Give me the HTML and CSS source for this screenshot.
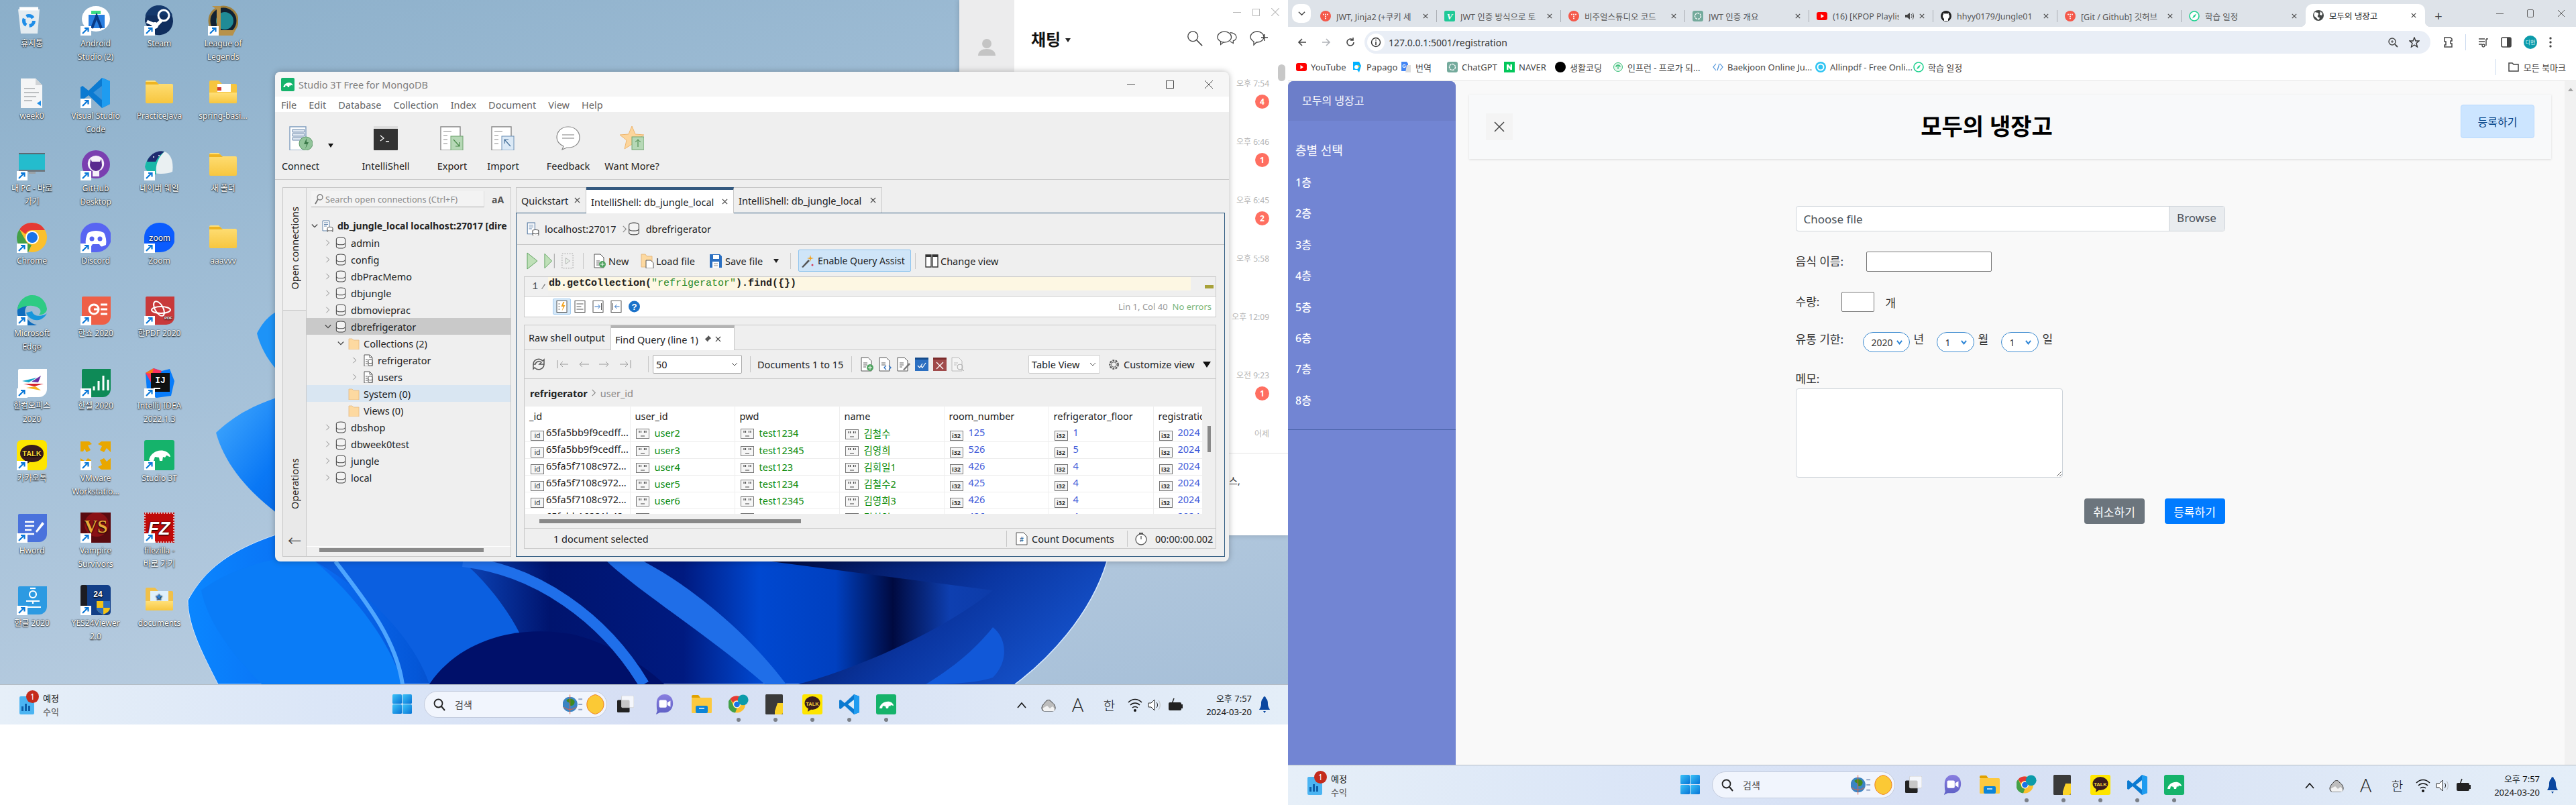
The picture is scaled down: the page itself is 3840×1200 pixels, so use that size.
FILE: index.html
```html
<!DOCTYPE html>
<html lang="ko">
<head>
	<meta charset="UTF-8">
	<title>모두의 냉장고</title>
	<link rel="stylesheet" href="styles.css">
</head>
<body>
<svg class="defs" xmlns="http://www.w3.org/2000/svg">
	<defs>
		<linearGradient id="wp-a" x1="0" y1="0" x2="1" y2="1"><stop offset="0" stop-color="#4db2ff"/><stop offset=".45" stop-color="#0a78f5"/><stop offset="1" stop-color="#0450d2"/></linearGradient>
		<linearGradient id="wp-b" x1="0" y1="0" x2="1" y2="0"><stop offset="0" stop-color="#0a86ff"/><stop offset=".14" stop-color="#0a6cf2"/><stop offset=".24" stop-color="#0457d8"/><stop offset=".3" stop-color="#0a3fb0"/><stop offset=".38" stop-color="#00146e"/><stop offset=".52" stop-color="#001a80"/><stop offset=".6" stop-color="#0048d0"/><stop offset=".68" stop-color="#0040c0"/><stop offset=".74" stop-color="#000a40"/><stop offset=".8" stop-color="#0e3fb0"/><stop offset="1" stop-color="#0a2f90"/></linearGradient>
		<linearGradient id="wp-c" x1="0" y1="0" x2="1" y2=".4"><stop offset="0" stop-color="#000a40"/><stop offset=".6" stop-color="#0a35a0"/><stop offset="1" stop-color="#1450c8"/></linearGradient>
		<linearGradient id="fold" x1="0" y1="0" x2="0" y2="1"><stop offset="0" stop-color="#ffe07a"/><stop offset="1" stop-color="#f7c63f"/></linearGradient>
		<linearGradient id="win" x1="0" y1="0" x2="1" y2="1"><stop offset="0" stop-color="#3cc4f8"/><stop offset="1" stop-color="#0773d6"/></linearGradient>
		<linearGradient id="tball" x1="0" y1="0" x2="0" y2="1"><stop offset="0" stop-color="#8a7fe0"/><stop offset="1" stop-color="#5d5fc4"/></linearGradient>

		<g id="sc"><rect x="0" y="31" width="16" height="14" fill="#fff"/><path d="M3 42l8-8M6 34h5.5v5.5" fill="none" stroke="#0a78d8" stroke-width="2.2"/></g>
		<g id="d-bin"><path d="M2 6h32l-3 36H6z" fill="#e4ecf1"/><path d="M4 5h28" stroke="#fff" stroke-width="5"/><circle cx="18" cy="23" r="7.5" fill="none" stroke="#1f8ee8" stroke-width="5" stroke-dasharray="11 4.7"/></g>
		<g id="d-android"><ellipse cx="23" cy="20" rx="21" ry="19" fill="#fff"/><path d="M16 8h14v5H16z" fill="#3ddc84"/><path d="M12 14h24v20H12z" fill="#2a7fe0"/><path d="M17 34l7-18 7 18" fill="none" stroke="#083a86" stroke-width="4"/></g>
		<g id="d-steam"><path d="M1 24a21 21 0 1 1 6 14z" fill="#102e5e"/><path d="M1 18a21 21 0 0 1 41-3H1z" fill="#14386c"/><circle cx="29" cy="15" r="8" fill="none" stroke="#fff" stroke-width="3"/><path d="M4 24l14 6 8-8" fill="none" stroke="#fff" stroke-width="5"/><circle cx="16" cy="30" r="5" fill="#fff"/></g>
		<g id="d-lol"><circle cx="23" cy="23" r="21" fill="#123" stroke="#a0803c" stroke-width="3"/><circle cx="25" cy="23" r="13" fill="#1f8b96"/><path d="M6 1h13v36h22l-4 8H10l3-4V6z" fill="#b7924b"/></g>
		<g id="d-doc"><path d="M6 1h22l10 10v34H6z" fill="#f4f5f6"/><path d="M28 1v10h10" fill="#d0d3d6"/><path d="M11 16h16M11 22h22M11 28h18M11 34h12" stroke="#a9adb0" stroke-width="1.6"/><path d="M30 38l6-4v8z" fill="#1f8ee8"/></g>
		<g id="d-vscode"><path d="M32 0l12 5v34l-12 6L12 26 3 33l-3-2v-17l3-2 9 7z" fill="#0b7ad1"/><path d="M32 0l12 5v34l-12 6z" fill="#1f9cf0"/><path d="M32 12L19 22l13 11z" fill="#fff" fill-opacity=".2"/></g>
		<g id="d-folder"><path d="M2 6a2 2 0 0 1 2-2h12l5 5h20a2 2 0 0 1 2 2v25a2 2 0 0 1-2 2H4a2 2 0 0 1-2-2z" fill="url(#fold)"/><path d="M2 6h16l4 4H2z" fill="#eeb421"/></g>
		<g id="d-folder2"><path d="M2 6a2 2 0 0 1 2-2h12l5 5h20a2 2 0 0 1 2 2v25a2 2 0 0 1-2 2H4a2 2 0 0 1-2-2z" fill="#f6c53e"/><path d="M14 9h20v12H14z" fill="#fff"/><path d="M14 14h6v5h-6z" fill="#d23b30"/><path d="M2 22h41v14a2 2 0 0 1-2 2H4a2 2 0 0 1-2-2z" fill="url(#fold)"/></g>
		<g id="d-pc"><rect x="3" y="4" width="39" height="27" fill="#24bccd"/><rect x="3" y="4" width="39" height="2" fill="#5d6a74"/><rect x="3" y="29" width="39" height="3" fill="#6e7880"/><path d="M18 32h10v3H18z" fill="#9aa2a8"/></g>
		<g id="d-github"><circle cx="23" cy="21" r="21" fill="#7a3fb0"/><path d="M23 8a12 12 0 0 0-5 23v8h10v-8a12 12 0 0 0-5-23z" fill="#fff" fill-opacity=".92"/><path d="M15 13l2 4h12l2-4 1 9a9 9 0 0 1-18 0z" fill="#5a2a90"/></g>
		<g id="d-whale"><path d="M1 25C3 8 20 0 30 2c10 3 14 16 12 30-8 4-32 6-41-7z" fill="#eaf0f2"/><path d="M1 25C3 8 20 0 30 2 22 10 16 20 18 36 10 36 3 32 1 25z" fill="#19b7a8"/><path d="M4 17C8 6 20-1 30 2c-6 4-10 9-13 15z" fill="#1f2b70"/><circle cx="14" cy="10" r="1" fill="#fff"/><circle cx="22" cy="8" r="1" fill="#fff"/></g>
		<g id="d-chrome"><circle cx="23" cy="22" r="22" fill="#fbc02d"/><path d="M23 0a22 22 0 0 1 19 11H23a11 11 0 0 0-10 6L4 10A22 22 0 0 1 23 0z" fill="#e53935"/><path d="M4 10l9 16a11 11 0 0 0 9 7l-5 11A22 22 0 0 1 4 10z" fill="#43a047"/><circle cx="23" cy="22" r="10" fill="#fff"/><circle cx="23" cy="22" r="8" fill="#1a73e8"/></g>
		<g id="d-discord"><path d="M0 22a22 22 0 0 1 22-22h2a22 22 0 0 1 22 22 22 22 0 0 1-22 22H0z" fill="#5865f2"/><path d="M11 15c8-4 16-4 24 0 3 6 4 12 3 18-4 2-6 3-8 2l-2-3H18l-2 3c-2 1-4 0-8-2-1-6 0-12 3-18z" fill="#fff"/><circle cx="17" cy="24" r="3.5" fill="#5865f2"/><circle cx="29" cy="24" r="3.5" fill="#5865f2"/></g>
		<g id="d-zoom"><path d="M0 22a22 22 0 0 1 22-22h2a22 22 0 0 1 22 22 22 22 0 0 1-22 22H0z" fill="#0b5cff"/><text x="23" y="27" text-anchor="middle" class="svgt z">zoom</text></g>
		<g id="d-edge"><path d="M1 22A22 22 0 0 1 44 17C40 8 20 8 14 18 8 28 18 43 30 44 14 50-1 38 1 22z" fill="#0f6cbd"/><path d="M1 22C2 8 13 0 23 0c12 0 20 8 22 20 0 6-6 10-12 9 5-4 3-12-10-13C12 15 3 20 1 22z" fill="#2ecb84"/><path d="M14 26c2 8 13 14 22 10 4-2 7-5 9-9-4 4-20 7-22-3z" fill="#1896dc"/></g>
		<g id="d-show"><path d="M2 4a2 2 0 0 1 2-2h41v30a12 12 0 0 1-12 12H2z" fill="#ee5f47"/><circle cx="20" cy="21" r="7" fill="none" stroke="#fff" stroke-width="3"/><path d="M20 21h8M30 14h10M30 21h10M30 28h10" stroke="#fff" stroke-width="3"/></g>
		<g id="d-pdf"><path d="M2 4a2 2 0 0 1 2-2h41v30a12 12 0 0 1-12 12H2z" fill="#c8393a"/><g fill="none" stroke="#fff" stroke-width="2"><ellipse cx="22" cy="20" rx="6" ry="12" transform="rotate(-30 22 20)"/><ellipse cx="25" cy="22" rx="14" ry="5"/></g><text x="36" y="36" text-anchor="middle" class="svgt p">PDF</text></g>
		<g id="d-office"><path d="M2 4a2 2 0 0 1 2-2h41v30a12 12 0 0 1-12 12H2z" fill="#fff"/><path d="M8 20l22-5-12 7z" fill="#16a5c8"/><path d="M10 24h30l-14 4z" fill="#d5232c"/><path d="M14 30l14-2 8 6z" fill="#f4b01c"/><path d="M22 21l14-9-4 10z" fill="#6a2fa0"/></g>
		<g id="d-cell"><path d="M2 4a2 2 0 0 1 2-2h41v30a12 12 0 0 1-12 12H2z" fill="#0e8a57"/><path d="M20 34v-6M27 34V20M34 34V12M41 34V18" stroke="#fff" stroke-width="3"/></g>
		<g id="d-idea"><path d="M2 8L14 1l12 4 12-3 7 18-5 22-22 3-14-10z" fill="#087cfa"/><path d="M2 8L14 1l12 4-12 24z" fill="#fe315d"/><path d="M2 8l12-7-2 8z" fill="#f97a12"/><rect x="10" y="8" width="28" height="28" fill="#111"/><text x="24" y="23" text-anchor="middle" class="svgt ij">IJ</text><path d="M14 31h10" stroke="#fff" stroke-width="2"/></g>
		<g id="d-talk"><rect x="0" y="0" width="45" height="45" rx="7" fill="#fee500"/><ellipse cx="22.5" cy="20" rx="17.5" ry="13" fill="#3a1d1d"/><path d="M12 30l-1 8 8-5z" fill="#3a1d1d"/><text x="22.5" y="24" text-anchor="middle" class="svgt t">TALK</text></g>
		<g id="d-vm" fill="#e9a700"><path d="M0 2h13l4 4-6 2 4 7-6 3-3-5-2 4H0z"/><path d="M45 2H31l-5 4 6 3-3 6 6 3 4-6 6 6z"/><path d="M0 44h13l4-4-5-3 4-7-5-3-4 5-7-5z"/><path d="M45 44H31l-5-4 6-3-3-7 6-3 4 5 6-5z"/></g>
		<g id="d-3t"><rect width="45" height="45" rx="3" fill="#15b36b"/><path d="M7 30c2-10 12-16 22-14 6 1 10 6 10 9-3 0-4-2-6-2l-2 3-3-1-1 6h-4l-1-5-6-1-2 6H9z" fill="#fff"/></g>
		<g id="d-hword"><path d="M2 4a2 2 0 0 1 2-2h41v30a12 12 0 0 1-12 12H2z" fill="#4a72dc"/><path d="M12 14h14M12 20h14M12 26h10M12 32h14" stroke="#fff" stroke-width="2.6"/><path d="M28 28l10-14 3 3-11 13z" fill="#fff"/></g>
		<g id="d-vs"><rect width="45" height="45" fill="#5a0a10"/><circle cx="24" cy="18" r="18" fill="#8a1015"/><text x="23" y="30" text-anchor="middle" class="svgt vs">VS</text></g>
		<g id="d-fz"><rect width="45" height="45" fill="#bf0a0a"/><path d="M1 1h43v43H1z" fill="none" stroke="#e9e2e2" stroke-width="1.6" stroke-dasharray="2 2"/><text x="22" y="33" text-anchor="middle" class="svgt fz">FZ</text></g>
		<g id="d-hangul"><path d="M2 4a2 2 0 0 1 2-2h41v30a12 12 0 0 1-12 12H2z" fill="#2c9ae2"/><circle cx="24" cy="14" r="5" fill="none" stroke="#fff" stroke-width="2.2"/><path d="M14 24h20M24 24v4M12 33h24" stroke="#fff" stroke-width="2.2"/><path d="M20 5h8" stroke="#fff" stroke-width="2.2"/></g>
		<g id="d-yes"><rect width="45" height="45" rx="5" fill="#123f88"/><rect width="10" height="45" rx="3" fill="#1c1c22"/><text x="26" y="18" text-anchor="middle" class="svgt y">24</text><path d="M24 24h20v10c0 5-5 8-10 10-5-2-10-5-10-10z" fill="#f3c316"/><path d="M34 24h10v10H34zM24 34h10v10c-5-2-10-5-10-10z" fill="#2f6fbc"/></g>
		<g id="d-docs"><path d="M2 6a2 2 0 0 1 2-2h12l5 5h20a2 2 0 0 1 2 2v25a2 2 0 0 1-2 2H4a2 2 0 0 1-2-2z" fill="#f0c04a"/><path d="M9 9h27v18H9z" fill="#dff0fb"/><text x="22" y="21" text-anchor="middle" class="svgt s">★</text><path d="M2 24h41v12a2 2 0 0 1-2 2H4a2 2 0 0 1-2-2z" fill="url(#fold)"/></g>

		<g id="t-db"><ellipse cx="9" cy="4" rx="7" ry="3" /><path d="M2 4v11c0 4 14 4 14 0V4M2 9.5c0 4 14 4 14 0"/></g>
		<g id="t-conn"><path d="M2 1h10v15H2z" fill="#fff" stroke="#5b7ea6"/><path d="M4 4h6M4 6.5h6M4 9h4" stroke="#5b7ea6"/><ellipse cx="13" cy="12" rx="4" ry="1.6" fill="#fff" stroke="#555"/><path d="M9 12v5c0 2 8 2 8 0v-5M9 14.5c0 2 8 2 8 0" fill="#fff" stroke="#555"/></g>
		<g id="t-fold"><path d="M2 2h5l2 2h8v14H2z" fill="#fdd9a0" stroke="#e5b980" stroke-width=".8"/></g>
		<g id="t-coll"><path d="M4 1h8l4 4v13H4z" fill="#fff" stroke="#555"/><path d="M12 1v4h4" fill="none" stroke="#555"/><path d="M6 8h3M6 11h3M6 14h3" stroke="#555"/><ellipse cx="13" cy="9" rx="3" ry="1.2" fill="#fff" stroke="#555"/><path d="M10 9v7c0 1.6 6 1.6 6 0V9M10 12.5c0 1.6 6 1.6 6 0" fill="#fff" stroke="#555"/></g>
		<g id="t-str"><rect x=".5" y=".5" width="19" height="14" fill="#f6f6f6" stroke="#777"/><path d="M5 3v3M7.500 3v3M12.500 3v3M15 3v3M7 11h6" stroke="#444" stroke-width="1.200"/></g>
		<g id="i-chev"><path d="M3 1l5 5-5 5" fill="none" stroke="#888" stroke-width="1.200"/></g>
		<g id="i-chevd"><path d="M1 3l5 5 5-5" fill="none" stroke="#444" stroke-width="1.500"/></g>

		<g id="f-tis"><circle cx="8" cy="8" r="8" fill="#f4594b"/><g fill="#fff"><circle cx="5" cy="5.500" r="1"/><circle cx="8" cy="5.500" r="1"/><circle cx="11" cy="5.500" r="1"/><circle cx="8" cy="8.500" r="1"/><circle cx="8" cy="11.500" r="1"/></g></g>
		<g id="f-yt"><rect y="2" width="16" height="12" rx="3" fill="#f00"/><path d="M6.500 5l4.500 3-4.500 3z" fill="#fff"/></g>
		<g id="f-gpt"><rect width="16" height="16" rx="3" fill="#74aa9c"/><circle cx="8" cy="8" r="4.500" fill="none" stroke="#fff" stroke-width="1.400" stroke-dasharray="3 1"/></g>
		<g id="f-git"><circle cx="8" cy="8" r="8" fill="#222"/><path d="M5 15v-3c-1-1-2-2-2-4 0-1 .4-2 1-2.500L4 3.500l2 1c1.300-.4 2.700-.4 4 0l2-1-.1 2c.6.5 1.100 1.500 1.100 2.500 0 2-1 3-2 4v3z" fill="#fff"/></g>
		<g id="f-compass"><circle cx="8" cy="8" r="7" fill="#fff" stroke="#1fd18f" stroke-width="1.600"/><path d="M11 4.500L9 9 5 11.500 7 7z" fill="#1fd18f"/></g>
		<g id="f-globe"><circle cx="8" cy="8" r="8" fill="#444746"/><path d="M3 3c2 1 4 0 5 2s-2 3-1 5 2 0 3 2l-2 3c-2-2-3-4-5-5S1 5 3 3zM11 2l3 3-1 3-3-1z" fill="#fff"/></g>

		<g id="x-ic"><path d="M1 1l8 8M9 1l-8 8" stroke="#444" stroke-width="1.400"/></g>

		<g id="tb-win"><rect width="14" height="14" rx="1.500" fill="url(#win)"/><rect x="15" width="14" height="14" rx="1.500" fill="url(#win)"/><rect y="15" width="14" height="14" rx="1.500" fill="url(#win)"/><rect x="15" y="15" width="14" height="14" rx="1.500" fill="url(#win)"/></g>
		<g id="tb-mag"><circle cx="7.500" cy="7.500" r="6" fill="none" stroke="#222" stroke-width="1.800"/><path d="M12 12l5 6" stroke="#222" stroke-width="2"/></g>
		<g id="tb-art"><circle cx="11" cy="15" r="11.500" fill="#3b84c4"/><path d="M6 8c4-3 10-2 12 2 1 4-3 8-6 7-2-1-1-4-3-5S5 10 6 8z" fill="#3f8a1f"/><path d="M11 0v30M1 19c6 5 14 5 20 0" stroke="#e9603c" fill="none"/><path d="M30 7h-6M30 15h-6M30 23h-6" stroke="#94a6c8" stroke-width="2"/><path d="M50 0c-9 2-13 8-13 15s4 13 13 15c8-2 13-8 13-15S58 2 50 0z" fill="#fbc935" stroke="#ed7d1c" stroke-width="1"/></g>
		<g id="tb-view"><rect x="0" y="8" width="23" height="23" rx="2" fill="#222"/><rect x="8" y="0" width="23" height="22" rx="2" fill="#fff" fill-opacity=".75" stroke="#ccc"/></g>
		<g id="tb-meet"><path d="M2 14C2 5 8 0 15 0s13 5 13 14-6 15-13 15H7l-6 3 2-6c-1-3-1-8-1-12z" fill="url(#tball)"/><rect x="6" y="9" width="12" height="12" rx="2" fill="#fff"/><path d="M19 13l5-3v10l-5-3z" fill="#fff"/></g>
		<g id="tb-exp"><path d="M0 3a2 2 0 0 1 2-2h8l3 4H0z" fill="#e0a100"/><rect y="5" width="30" height="23" rx="1.500" fill="#fcc93f"/><rect x="6" y="17" width="18" height="11" rx="2" fill="#0b84d8"/><path d="M11 21h8" stroke="#fff" stroke-width="1.400"/></g>
		<g id="tb-chrome"><circle cx="15" cy="16" r="15" fill="#fbc02d"/><path d="M15 1a15 15 0 0 1 13 8H15a7.500 7.500 0 0 0-7 4L3 6A15 15 0 0 1 15 1z" fill="#e53935"/><path d="M3 6l5 11a7.500 7.500 0 0 0 7 6l-3 8A15 15 0 0 1 3 6z" fill="#43a047"/><circle cx="15" cy="16" r="6.500" fill="#fff"/><circle cx="15" cy="16" r="5.200" fill="#1a73e8"/><circle cx="26" cy="8" r="9.500" fill="#0c9baa"/></g>
		<g id="tb-note"><rect width="26" height="30" rx="1.500" fill="#3a3a3a"/><path d="M14 25l4-12h8v14a3 3 0 0 1-3 3h-9z" fill="#fbd327"/></g>
		<g id="tb-talk"><rect width="30" height="30" rx="3" fill="#fee500"/><ellipse cx="15" cy="13" rx="11.500" ry="10" fill="#3a1d1d"/><path d="M9 20l-1 6 6-4z" fill="#3a1d1d"/><text x="15" y="16.500" text-anchor="middle" class="svgt tt">TALK</text></g>
		<g id="tb-code"><path d="M22 0l8 3v24l-8 3L8 17l-6 5-2-1V9l2-1 6 5z" fill="#0b7ad1"/><path d="M22 0l8 3v24l-8 3z" fill="#1f9cf0"/><path d="M22 8l-9 7 9 7z" fill="#fff" fill-opacity=".85"/></g>
		<g id="tb-3t"><rect width="30" height="30" rx="3" fill="#15b36b"/><path d="M5 21c1-7 8-11 15-10 4 1 6 4 6 6-2 0-3-1-4-1l-1 2-2-1-1 4h-3l-1-3-4-1-1 4H6z" fill="#fff"/></g>
		<g id="tr-cloud"><path d="M4 20c-3 0-4-2-4-5s3-6 5-8c2-4 7-5 9-1 3 2 6 5 6 9s-2 5-5 5z" fill="#bdbdbd" stroke="#333" stroke-width="1"/><path d="M1 16l7-4 4 4 4-3 3 3v3a2 2 0 0 1-2 1H3z" fill="#f3f3f3"/></g>
		<g id="tr-wifi"><path d="M1 7c6-6 14-6 20 0M4 11c4-4 10-4 14 0M7 15c2-2 6-2 8 0" fill="none" stroke="#111" stroke-width="1.500"/><circle cx="11" cy="19" r="2" fill="#111"/></g>
		<g id="tr-vol"><path d="M1 8h4l5-5v16l-5-5H1z" fill="#fff" stroke="#222"/><path d="M13 7c2 2 2 6 0 8" fill="none" stroke="#222"/><path d="M16 4c3 4 3 10 0 14" fill="none" stroke="#bbb"/></g>
		<g id="tr-bat"><rect x="1" y="6" width="19" height="12" rx="2" fill="#222"/><rect x="20" y="9" width="2" height="6" fill="#222"/><path d="M9 0l-3 8h4l-2 7" fill="none" stroke="#222" stroke-width="1.500"/></g>
		<g id="tr-bell"><path d="M9 0a3 3 0 0 1 2 3c3 2 3 6 3 9 0 3 2 6 3 8H1c1-2 3-5 3-8 0-3 0-7 3-9a3 3 0 0 1 2-3z" fill="#0a47a0"/><path d="M7 22h4l-2 3z" fill="#0a47a0"/></g>

		<g id="tool-connect"><path d="M2 1h24v35H2z" fill="#fff" stroke="#7f9dbf" stroke-width="1.400"/><path d="M6 5h18v4H6zM6 11h18v4H6zM6 17h18v4H6z" fill="#dde6f0" stroke="#6a88ab"/><circle cx="26" cy="26" r="10" fill="#92c49a" stroke="#5e9a6a"/><path d="M27 18l-4 9h4l-2 7 5-10h-3z" fill="#3c7a4a"/></g>
		<g id="tool-shell"><rect width="36" height="36" rx="1" fill="#333"/><rect width="36" height="4" fill="#ddd"/><path d="M10 14l5 4-5 4" fill="none" stroke="#fff" stroke-width="1.300"/><path d="M18 23h5" stroke="#fff" stroke-width="1.300"/></g>
		<g id="tool-exp"><path d="M1 1h29v35H1z" fill="#fff" stroke="#888" stroke-width="1.400"/><path d="M5 8h12M5 14h6M5 20h6M5 26h6" stroke="#888"/><rect x="16" y="15" width="18" height="21" fill="#b6d8b6" stroke="#6ea36e"/><path d="M20 20l9 10m0-6v6h-6" fill="none" stroke="#4a8a4a" stroke-width="1.200"/></g>
		<g id="tool-imp"><path d="M1 1h29v35H1z" fill="#fff" stroke="#888" stroke-width="1.400"/><path d="M5 8h12M5 14h6M5 20h6M5 26h6" stroke="#888"/><rect x="16" y="15" width="18" height="21" fill="#dbe9f6" stroke="#6a8eb3"/><path d="M29 30l-9-10m0 6v-6h6" fill="none" stroke="#456f99" stroke-width="1.200"/></g>
		<g id="tool-fb"><path d="M18 1c10 0 17 7 17 16s-7 15-17 15h-2l-7 3 2-5C5 27 1 23 1 17 1 8 8 1 18 1z" fill="#fff" stroke="#888" stroke-width="1.200"/><path d="M9 13h18M9 18h18" stroke="#aaa" stroke-width="1.400"/></g>
		<g id="tool-more"><path d="M18 0l5 12 13 1-10 8 3 13-11-7-11 7 3-13L0 13l13-1z" fill="#fcd59c" stroke="#eeb66f"/><rect x="18" y="16" width="18" height="19" fill="#b6d8b6" stroke="#6ea36e"/><path d="M27 31v-11m-4 4l4-4 4 4" fill="none" stroke="#3e7f3e"/></g>
	</defs>
</svg>

<div class="screens">
	<section class="monitor monitor-left">
		<div class="desktop">
			<svg class="wallpaper" viewBox="0 0 1920 1020" preserveAspectRatio="none">
				<path d="M383 497C400 465 420 450 520 440V620C440 590 395 545 383 497Z" fill="#1d93f7"/>
				<path d="M322 645C360 610 400 590 520 565V830C400 770 340 710 322 645Z" fill="url(#wp-a)"/>
				<path d="M280 895C310 840 360 800 520 770L1700 680 1650 837C1625 920 1560 985 1513 1020H325C305 980 280 935 280 895Z" fill="url(#wp-b)" stroke="#d3e6fb" stroke-width="1"/>
				<path d="M300 880C340 850 420 820 470 837 520 880 580 950 600 1020H390C350 980 310 930 300 880Z" fill="#0a7cf7"/>
				<path d="M470 837C560 890 620 960 640 1020H800C790 950 740 880 690 837Z" fill="#0b5fe0"/>
				<path d="M600 1020C590 950 540 890 500 837" fill="none" stroke="#4ea6ff" stroke-width="6"/>
				<path d="M640 1020C680 960 760 930 850 945 900 955 960 990 990 1020Z" fill="#00106a"/>
				<path d="M690 837C800 850 900 920 960 1020" fill="none" stroke="#1f6fea" stroke-width="16"/>
				<path d="M905 837C950 880 1060 950 1140 1020H1172C1120 950 1040 880 960 837Z" fill="#1f6ee8"/>
				<path d="M1150 837H1650C1625 920 1560 985 1513 1020H1190C1300 990 1420 930 1480 880Z" fill="url(#wp-c)"/>
				<path d="M1480 935C1500 950 1505 985 1480 1010 1450 1020 1400 1020 1380 1020 1430 990 1460 960 1480 935Z" fill="#1158d8"/>
				<path d="M1650 837C1625 920 1560 985 1513 1020" fill="none" stroke="#d3e6fb" stroke-width="1.500"/>
			</svg>

			<div class="icons">
				<div class="d-item"><svg viewBox="0 0 45 45"><use href="#d-bin"/></svg><span>휴지통</span></div>
				<div class="d-item"><svg viewBox="0 0 45 45"><use href="#d-android"/><use href="#sc"/></svg><span>Android<br>Studio (2)</span></div>
				<div class="d-item"><svg viewBox="0 0 45 45"><use href="#d-steam"/><use href="#sc"/></svg><span>Steam</span></div>
				<div class="d-item"><svg viewBox="0 0 45 45"><use href="#d-lol"/><use href="#sc"/></svg><span>League of<br>Legends</span></div>

				<div class="d-item"><svg viewBox="0 0 45 45"><use href="#d-doc"/></svg><span>week0</span></div>
				<div class="d-item"><svg viewBox="0 0 45 45"><use href="#d-vscode"/><use href="#sc"/></svg><span>Visual Studio<br>Code</span></div>
				<div class="d-item"><svg viewBox="0 0 45 45"><use href="#d-folder"/></svg><span>PracticeJava</span></div>
				<div class="d-item"><svg viewBox="0 0 45 45"><use href="#d-folder2"/></svg><span>spring-basi...</span></div>

				<div class="d-item"><svg viewBox="0 0 45 45"><use href="#d-pc"/><use href="#sc"/></svg><span>내 PC - 바로<br>가기</span></div>
				<div class="d-item"><svg viewBox="0 0 45 45"><use href="#d-github"/><use href="#sc"/></svg><span>GitHub<br>Desktop</span></div>
				<div class="d-item"><svg viewBox="0 0 45 45"><use href="#d-whale"/><use href="#sc"/></svg><span>네이버 웨일</span></div>
				<div class="d-item"><svg viewBox="0 0 45 45"><use href="#d-folder"/></svg><span>새 폴더</span></div>

				<div class="d-item"><svg viewBox="0 0 45 45"><use href="#d-chrome"/><use href="#sc"/></svg><span>Chrome</span></div>
				<div class="d-item"><svg viewBox="0 0 45 45"><use href="#d-discord"/><use href="#sc"/></svg><span>Discord</span></div>
				<div class="d-item"><svg viewBox="0 0 45 45"><use href="#d-zoom"/><use href="#sc"/></svg><span>Zoom</span></div>
				<div class="d-item"><svg viewBox="0 0 45 45"><use href="#d-folder"/></svg><span>aaavvv</span></div>

				<div class="d-item"><svg viewBox="0 0 45 45"><use href="#d-edge"/><use href="#sc"/></svg><span>Microsoft<br>Edge</span></div>
				<div class="d-item"><svg viewBox="0 0 45 45"><use href="#d-show"/><use href="#sc"/></svg><span>한쇼 2020</span></div>
				<div class="d-item"><svg viewBox="0 0 45 45"><use href="#d-pdf"/><use href="#sc"/></svg><span>한PDF 2020</span></div>
				<div></div>

				<div class="d-item"><svg viewBox="0 0 45 45"><use href="#d-office"/><use href="#sc"/></svg><span>한컴오피스<br>2020</span></div>
				<div class="d-item"><svg viewBox="0 0 45 45"><use href="#d-cell"/><use href="#sc"/></svg><span>한셀 2020</span></div>
				<div class="d-item"><svg viewBox="0 0 45 45"><use href="#d-idea"/><use href="#sc"/></svg><span>IntelliJ IDEA<br>2022.1.3</span></div>
				<div></div>

				<div class="d-item"><svg viewBox="0 0 45 45"><use href="#d-talk"/><use href="#sc"/></svg><span>카카오톡</span></div>
				<div class="d-item"><svg viewBox="0 0 45 45"><use href="#d-vm"/><use href="#sc"/></svg><span>VMware<br>Workstatio...</span></div>
				<div class="d-item"><svg viewBox="0 0 45 45"><use href="#d-3t"/><use href="#sc"/></svg><span>Studio 3T</span></div>
				<div></div>

				<div class="d-item"><svg viewBox="0 0 45 45"><use href="#d-hword"/><use href="#sc"/></svg><span>Hword</span></div>
				<div class="d-item"><svg viewBox="0 0 45 45"><use href="#d-vs"/><use href="#sc"/></svg><span>Vampire<br>Survivors</span></div>
				<div class="d-item"><svg viewBox="0 0 45 45"><use href="#d-fz"/><use href="#sc"/></svg><span>filezilla -<br>바로 가기</span></div>
				<div></div>

				<div class="d-item"><svg viewBox="0 0 45 45"><use href="#d-hangul"/><use href="#sc"/></svg><span>한글 2020</span></div>
				<div class="d-item"><svg viewBox="0 0 45 45"><use href="#d-yes"/><use href="#sc"/></svg><span>YES24Viewer<br>2.0</span></div>
				<div class="d-item"><svg viewBox="0 0 45 45"><use href="#d-docs"/></svg><span>documents</span></div>
			</div>

			<!-- kakaotalk, mostly behind studio 3t -->
			<div class="kakao">
				<div class="kk-nav">
					<svg class="kk-me" viewBox="0 0 28 28"><circle cx="14" cy="9" r="7" fill="#c4c4c4"/><path d="M1 27c0-7 6-10 13-10s13 3 13 10z" fill="#c4c4c4"/></svg>
				</div>
				<div class="kk-main">
					<div class="kk-win"><span class="kk-min"></span><span class="kk-max"></span><svg class="kk-x" viewBox="0 0 12 12"><path d="M0 0l12 12M12 0L0 12" stroke="#bbb" stroke-width="1.200"/></svg></div>
					<div class="kk-head">
						<span class="kk-title">채팅</span><span class="kk-caret"></span>
						<div class="kk-tools">
							<svg viewBox="0 0 26 26"><circle cx="10" cy="10" r="8" fill="none" stroke="#444" stroke-width="1.500"/><path d="M16 16l9 9" stroke="#444" stroke-width="1.800"/></svg>
							<svg viewBox="0 0 32 24"><ellipse cx="12" cy="10" rx="11" ry="8.500" fill="none" stroke="#444" stroke-width="1.300"/><path d="M21 3c5 0 10 3 10 7 0 3-2 5-5 6v4l-5-3M6 17v5l5-4" fill="none" stroke="#444" stroke-width="1.300"/></svg>
							<svg viewBox="0 0 28 24"><path d="M11 2c6 0 10 4 10 8s-4 8-10 8h-1l-4 4v-5C3 15 1 13 1 10c0-4 4-8 10-8z" fill="none" stroke="#444" stroke-width="1.300"/><path d="M22 6v10M17 11h10" stroke="#444" stroke-width="1.400"/></svg>
						</div>
					</div>
					<div class="kk-list">
						<div class="kk-row"><span class="kk-time">오후 7:54</span><span class="kk-badge">4</span></div>
						<div class="kk-row"><span class="kk-time">오후 6:46</span><span class="kk-badge">1</span></div>
						<div class="kk-row"><span class="kk-time">오후 6:45</span><span class="kk-badge">2</span></div>
						<div class="kk-row"><span class="kk-time">오후 5:58</span></div>
						<div class="kk-row"><span class="kk-time">오후 12:09</span></div>
						<div class="kk-row"><span class="kk-time">오전 9:23</span><span class="kk-badge">1</span></div>
						<div class="kk-row"><span class="kk-time">어제</span></div>
					</div>
					<div class="kk-ad">스,</div>
					<div class="kk-scroll"></div>
				</div>
			</div>

			<!-- studio 3t -->
			<div class="studio">
				<div class="st-title">
					<svg class="st-logo" viewBox="0 0 30 30"><use href="#tb-3t"/></svg>
					<span>Studio 3T Free for MongoDB</span>
					<div class="st-win">
						<span class="st-min"></span><span class="st-max"></span>
						<svg viewBox="0 0 12 12"><path d="M0 0l12 12M12 0L0 12" stroke="#444" stroke-width="1"/></svg>
					</div>
				</div>
				<div class="st-menu"><span>File</span><span>Edit</span><span>Database</span><span>Collection</span><span>Index</span><span>Document</span><span>View</span><span>Help</span></div>
				<div class="st-tools">
					<div class="st-tool w-connect"><svg viewBox="0 0 36 36"><use href="#tool-connect"/></svg><span>Connect</span><i class="tri st-tri"></i></div>
					<div class="st-tool w-shell"><svg viewBox="0 0 36 36"><use href="#tool-shell"/></svg><span>IntelliShell</span></div>
					<div class="st-tool w-exp"><svg viewBox="0 0 36 36"><use href="#tool-exp"/></svg><span>Export</span></div>
					<div class="st-tool w-imp"><svg viewBox="0 0 36 36"><use href="#tool-imp"/></svg><span>Import</span></div>
					<div class="st-tool w-fb"><svg viewBox="0 0 36 36"><use href="#tool-fb"/></svg><span>Feedback</span></div>
					<div class="st-tool w-more"><svg viewBox="0 0 36 36"><use href="#tool-more"/></svg><span>Want More?</span></div>
				</div>
				<div class="st-body">
					<div class="st-left">
						<div class="vtabs">
							<div class="vtab vtab-open"><span>Open connections</span></div>
							<div class="vtab vtab-ops"><span>Operations</span><b>←</b></div>
						</div>
						<div class="tree-area">
							<div class="tree-search">
								<div class="tree-input">
									<svg viewBox="0 0 14 16"><circle cx="9" cy="5" r="4" fill="none" stroke="#777" stroke-width="1.300"/><path d="M6 8l-4 7" stroke="#777" stroke-width="1.800"/></svg>
									<span>Search open connections (Ctrl+F)</span>
								</div>
								<b>aA</b>
							</div>
							<div class="tree">
								<div class="t-row lv0 root"><svg class="chev" viewBox="0 0 12 12"><use href="#i-chevd"/></svg><svg class="ico" viewBox="0 0 18 18"><use href="#t-conn"/></svg><span>db_jungle_local localhost:27017 [dire</span></div>
								<div class="t-row lv1"><svg class="chev" viewBox="0 0 12 12"><use href="#i-chev"/></svg><svg class="ico db" viewBox="0 0 18 19"><use href="#t-db"/></svg><span>admin</span></div>
								<div class="t-row lv1"><svg class="chev" viewBox="0 0 12 12"><use href="#i-chev"/></svg><svg class="ico db" viewBox="0 0 18 19"><use href="#t-db"/></svg><span>config</span></div>
								<div class="t-row lv1"><svg class="chev" viewBox="0 0 12 12"><use href="#i-chev"/></svg><svg class="ico db" viewBox="0 0 18 19"><use href="#t-db"/></svg><span>dbPracMemo</span></div>
								<div class="t-row lv1"><svg class="chev" viewBox="0 0 12 12"><use href="#i-chev"/></svg><svg class="ico db" viewBox="0 0 18 19"><use href="#t-db"/></svg><span>dbjungle</span></div>
								<div class="t-row lv1"><svg class="chev" viewBox="0 0 12 12"><use href="#i-chev"/></svg><svg class="ico db" viewBox="0 0 18 19"><use href="#t-db"/></svg><span>dbmovieprac</span></div>
								<div class="t-row lv1 sel"><svg class="chev" viewBox="0 0 12 12"><use href="#i-chevd"/></svg><svg class="ico db" viewBox="0 0 18 19"><use href="#t-db"/></svg><span>dbrefrigerator</span></div>
								<div class="t-row lv2"><svg class="chev" viewBox="0 0 12 12"><use href="#i-chevd"/></svg><svg class="ico" viewBox="0 0 18 18"><use href="#t-fold"/></svg><span>Collections (2)</span></div>
								<div class="t-row lv3"><svg class="chev" viewBox="0 0 12 12"><use href="#i-chev"/></svg><svg class="ico" viewBox="0 0 18 18"><use href="#t-coll"/></svg><span>refrigerator</span></div>
								<div class="t-row lv3"><svg class="chev" viewBox="0 0 12 12"><use href="#i-chev"/></svg><svg class="ico" viewBox="0 0 18 18"><use href="#t-coll"/></svg><span>users</span></div>
								<div class="t-row lv2 hov"><span class="chev"></span><svg class="ico" viewBox="0 0 18 18"><use href="#t-fold"/></svg><span>System (0)</span></div>
								<div class="t-row lv2"><span class="chev"></span><svg class="ico" viewBox="0 0 18 18"><use href="#t-fold"/></svg><span>Views (0)</span></div>
								<div class="t-row lv1"><svg class="chev" viewBox="0 0 12 12"><use href="#i-chev"/></svg><svg class="ico db" viewBox="0 0 18 19"><use href="#t-db"/></svg><span>dbshop</span></div>
								<div class="t-row lv1"><svg class="chev" viewBox="0 0 12 12"><use href="#i-chev"/></svg><svg class="ico db" viewBox="0 0 18 19"><use href="#t-db"/></svg><span>dbweek0test</span></div>
								<div class="t-row lv1"><svg class="chev" viewBox="0 0 12 12"><use href="#i-chev"/></svg><svg class="ico db" viewBox="0 0 18 19"><use href="#t-db"/></svg><span>jungle</span></div>
								<div class="t-row lv1"><svg class="chev" viewBox="0 0 12 12"><use href="#i-chev"/></svg><svg class="ico db" viewBox="0 0 18 19"><use href="#t-db"/></svg><span>local</span></div>
							</div>
							<div class="tree-scroll"><i></i></div>
						</div>
					</div>

					<div class="st-right">
						<div class="doc-tabs">
							<div class="doc-tab w-quick">Quickstart<svg viewBox="0 0 10 10"><use href="#x-ic"/></svg></div>
							<div class="doc-tab on w-shell1">IntelliShell: db_jungle_local<svg viewBox="0 0 10 10"><use href="#x-ic"/></svg></div>
							<div class="doc-tab w-shell2">IntelliShell: db_jungle_local<svg viewBox="0 0 10 10"><use href="#x-ic"/></svg></div>
						</div>
						<div class="doc-panel">
							<div class="crumb">
								<svg class="ico20" viewBox="0 0 18 18"><use href="#t-conn"/></svg><span>localhost:27017</span>
								<svg class="crumb-gt" viewBox="0 0 12 12"><use href="#i-chev"/></svg>
								<svg class="ico20 db" viewBox="0 0 18 19"><use href="#t-db"/></svg><span class="crumb-db">dbrefrigerator</span>
							</div>
							<div class="shell">
								<div class="sh-tools">
									<svg class="play" viewBox="0 0 18 26"><path d="M1 1l15 12L1 25z" fill="#bfe0b8" stroke="#5fa35f"/></svg>
									<svg class="play" viewBox="0 0 20 26"><path d="M1 1l12 12L1 25z" fill="#bfe0b8" stroke="#5fa35f"/><path d="M17 1v24" stroke="#999"/></svg>
									<svg class="play" viewBox="0 0 20 26"><rect x="1" y="1" width="18" height="24" fill="none" stroke="#999" stroke-dasharray="2 2"/><path d="M7 8l7 5-7 5z" fill="#e6eee6" stroke="#aaa"/></svg>
									<i class="sh-sep"></i>
									<div class="sh-btn b-new"><svg viewBox="0 0 18 22"><path d="M1 1h9l5 5v15H1z" fill="#fff" stroke="#555"/><path d="M4 11h5M4 14h5M4 17h4" stroke="#555"/><circle cx="13" cy="16" r="5" fill="#4fa35f"/><path d="M13 13v6M10 16h6" stroke="#fff"/></svg>New</div>
									<div class="sh-btn b-load"><svg viewBox="0 0 20 22"><path d="M1 1h6l2 3h8v16H1z" fill="#fdd9a0" stroke="#e5b980"/><path d="M8 10h7l4 4v8H8z" fill="#fff" stroke="#555"/></svg>Load file</div>
									<div class="sh-btn b-save"><svg viewBox="0 0 20 22"><path d="M1 1h15l3 3v17H1z" fill="#2b6fc1"/><rect x="6" y="2" width="9" height="6" fill="#fff"/><rect x="5" y="12" width="10" height="9" fill="#fff"/><path d="M7 15h6M7 18h6" stroke="#888"/></svg>Save file<i class="tri"></i></div>
									<i class="sh-sep"></i>
									<div class="sh-assist"><svg viewBox="0 0 20 20"><path d="M1 19L11 8l2 2L3 20z" fill="#555"/><path d="M14 1l1 4 4 1-4 1-1 4-1-4-4-1 4-1z" fill="#f2a21e"/><circle cx="17" cy="16" r="1.500" fill="#d23b5c"/></svg>Enable Query Assist</div>
									<i class="sh-sep"></i>
									<div class="sh-btn b-view"><svg viewBox="0 0 20 20"><path d="M1 1h8v18H1zM11 1h8v18h-8z" fill="#fff" stroke="#333" stroke-width="1.300"/><path d="M1 1h8v3H1zM11 1h8v3h-8z" fill="#333"/></svg>Change view</div>
								</div>

								<div class="editor">
									<div class="ed-line">
										<div class="ed-no"><span>1</span><svg viewBox="0 0 8 10"><path d="M1 9l5-8 1 1-5 7z" fill="#777"/></svg></div>
										<div class="ed-code"><b>db.getCollection(</b><em>"refrigerator"</em><b>).find({})</b></div>
										<div class="ed-mark"><i></i></div>
									</div>
									<div class="ed-foot">
										<div class="ed-ico on"><svg viewBox="0 0 16 18"><rect x=".5" y=".5" width="15" height="17" fill="#fff" stroke="#555"/><path d="M3 5h2M3 9h2M3 13h2" stroke="#555"/><path d="M10 2L7 9h3l-2 7 5-9h-3l2-5z" fill="#f2a21e"/></svg></div>
										<div class="ed-ico"><svg viewBox="0 0 16 18"><rect x=".5" y=".5" width="15" height="17" fill="#fff" stroke="#555"/><path d="M3 5h10M3 9h7M3 13h10" stroke="#555"/></svg></div>
										<div class="ed-ico"><svg viewBox="0 0 16 18"><rect x=".5" y=".5" width="15" height="17" fill="#fff" stroke="#555"/><path d="M3 9h7M8 6l3 3-3 3" fill="none" stroke="#2b6fc1"/><path d="M13 4v10" stroke="#555"/></svg></div>
										<div class="ed-ico"><svg viewBox="0 0 16 18"><rect x=".5" y=".5" width="15" height="17" fill="#fff" stroke="#555"/><path d="M13 9H6M9 6L6 9l3 3" fill="none" stroke="#2b6fc1"/><path d="M3 4v10" stroke="#555"/></svg></div>
										<div class="ed-ico"><svg viewBox="0 0 18 18"><circle cx="9" cy="9" r="9" fill="#1b72c9"/><text x="9" y="14" text-anchor="middle" class="svgt q">?</text></svg></div>
										<span class="ed-pos">Lin 1, Col 40</span><span class="ed-ok">No errors</span>
									</div>
								</div>

								<div class="results">
									<div class="res-tabs">
										<div class="res-tab w-raw">Raw shell output</div>
										<div class="res-tab on w-find">Find Query (line 1)
											<svg viewBox="0 0 12 14"><path d="M7 0l5 5-2 1-3 3-1 2-5-5 2-1 3-3zM3 9l-3 5" fill="#555"/></svg>
											<svg viewBox="0 0 10 10"><use href="#x-ic"/></svg>
										</div>
									</div>
									<div class="res-tools">
										<svg class="rt-refresh" viewBox="0 0 22 22"><path d="M3 11a8 8 0 0 1 14-5l2-2v7h-7l3-3a5.500 5.500 0 0 0-9 3zM19 11a8 8 0 0 1-14 5l-2 2v-7" fill="none" stroke="#555" stroke-width="1.500"/></svg>
										<svg class="rt-nav" viewBox="0 0 18 12"><path d="M1 0v12M17 6H5M9 2L5 6l4 4" fill="none" stroke="#999"/></svg>
										<svg class="rt-nav" viewBox="0 0 18 12"><path d="M17 6H3M7 2L3 6l4 4" fill="none" stroke="#999"/></svg>
										<svg class="rt-nav" viewBox="0 0 18 12"><path d="M1 6h14M11 2l4 4-4 4" fill="none" stroke="#999"/></svg>
										<svg class="rt-nav" viewBox="0 0 18 12"><path d="M17 0v12M1 6h12M9 2l4 4-4 4" fill="none" stroke="#999"/></svg>
										<i class="sh-sep"></i>
										<div class="dd dd-limit"><span>50</span><svg viewBox="0 0 12 12"><path d="M2 4l4 4 4-4" fill="none" stroke="#555"/></svg></div>
										<i class="sh-sep"></i>
										<span class="rt-count">Documents 1 to 15</span>
										<i class="sh-sep"></i>
										<div class="rt-icons">
											<svg viewBox="0 0 20 22"><path d="M1 1h10l5 5v15H1z" fill="#fff" stroke="#555"/><path d="M4 9h6M4 12h6M4 15h4" stroke="#555"/><circle cx="14" cy="16" r="5" fill="#4fa35f"/><path d="M14 13v6M11 16h6" stroke="#fff"/></svg>
											<svg viewBox="0 0 20 22"><path d="M1 1h10l5 5v15H1z" fill="#fff" stroke="#555"/><path d="M4 9h6M4 12h6" stroke="#555"/><path d="M11 13l-3 3 3 3M15 13l3 3-3 3" fill="none" stroke="#2b6fc1" stroke-width="1.300"/></svg>
											<svg viewBox="0 0 20 22"><path d="M1 1h10l5 5v15H1z" fill="#fff" stroke="#555"/><path d="M4 9h6M4 12h6M4 15h4" stroke="#555"/><path d="M9 19l9-10 2 2-9 9z" fill="#777"/></svg>
											<svg viewBox="0 0 20 20"><rect width="20" height="20" fill="#2b6fc1"/><rect y="0" width="20" height="3" fill="#144a8a"/><path d="M4 12l3 3 4-6M9 13l2 2 5-7" fill="none" stroke="#fff" stroke-width="1.200"/></svg>
											<svg viewBox="0 0 20 20"><rect width="20" height="20" fill="#a04a4a"/><rect y="0" width="20" height="3" fill="#7a2a2a"/><path d="M5 7l10 10M15 7L5 17" stroke="#fff" stroke-width="1.300"/></svg>
											<svg viewBox="0 0 20 22"><path d="M1 1h10l5 5v15H1z" fill="#f4f4f4" stroke="#bbb"/><path d="M4 9h6M4 12h4" stroke="#bbb"/><circle cx="13" cy="15" r="4" fill="none" stroke="#aaa"/><path d="M16 18l3 3" stroke="#aaa"/></svg>
										</div>
										<div class="dd dd-view"><span>Table View</span><svg viewBox="0 0 12 12"><path d="M2 4l4 4 4-4" fill="none" stroke="#555"/></svg></div>
										<div class="rt-custom"><svg viewBox="0 0 20 20"><circle cx="10" cy="10" r="6.500" fill="none" stroke="#555" stroke-width="2.500" stroke-dasharray="3 1.600"/><circle cx="10" cy="10" r="4" fill="none" stroke="#555"/></svg>Customize view<i class="tri big"></i></div>
									</div>
									<div class="res-path"><b>refrigerator</b><svg viewBox="0 0 12 12"><use href="#i-chev"/></svg><span>user_id</span></div>
									<div class="grid-wrap">
										<div class="grid-clip">
											<table class="docs">
												<thead><tr><th>_id</th><th>user_id</th><th>pwd</th><th>name</th><th>room_number</th><th>refrigerator_floor</th><th>registratio</th></tr></thead>
												<tbody>
													<tr><td class="oid"><i class="ty">id</i>65fa5bb9f9cedff...</td><td class="str"><svg class="ty-s" viewBox="0 0 20 15"><use href="#t-str"/></svg>user2</td><td class="str"><svg class="ty-s" viewBox="0 0 20 15"><use href="#t-str"/></svg>test1234</td><td class="str"><svg class="ty-s" viewBox="0 0 20 15"><use href="#t-str"/></svg>김철수</td><td class="num"><i class="ty">i32</i>125</td><td class="num"><i class="ty">i32</i>1</td><td class="num"><i class="ty">i32</i>2024</td></tr>
													<tr><td class="oid"><i class="ty">id</i>65fa5bb9f9cedff...</td><td class="str"><svg class="ty-s" viewBox="0 0 20 15"><use href="#t-str"/></svg>user3</td><td class="str"><svg class="ty-s" viewBox="0 0 20 15"><use href="#t-str"/></svg>test12345</td><td class="str"><svg class="ty-s" viewBox="0 0 20 15"><use href="#t-str"/></svg>김영희</td><td class="num"><i class="ty">i32</i>526</td><td class="num"><i class="ty">i32</i>5</td><td class="num"><i class="ty">i32</i>2024</td></tr>
													<tr><td class="oid"><i class="ty">id</i>65fa5f7108c972...</td><td class="str"><svg class="ty-s" viewBox="0 0 20 15"><use href="#t-str"/></svg>user4</td><td class="str"><svg class="ty-s" viewBox="0 0 20 15"><use href="#t-str"/></svg>test123</td><td class="str"><svg class="ty-s" viewBox="0 0 20 15"><use href="#t-str"/></svg>김회일1</td><td class="num"><i class="ty">i32</i>426</td><td class="num"><i class="ty">i32</i>4</td><td class="num"><i class="ty">i32</i>2024</td></tr>
													<tr><td class="oid"><i class="ty">id</i>65fa5f7108c972...</td><td class="str"><svg class="ty-s" viewBox="0 0 20 15"><use href="#t-str"/></svg>user5</td><td class="str"><svg class="ty-s" viewBox="0 0 20 15"><use href="#t-str"/></svg>test1234</td><td class="str"><svg class="ty-s" viewBox="0 0 20 15"><use href="#t-str"/></svg>김철수2</td><td class="num"><i class="ty">i32</i>425</td><td class="num"><i class="ty">i32</i>4</td><td class="num"><i class="ty">i32</i>2024</td></tr>
													<tr><td class="oid"><i class="ty">id</i>65fa5f7108c972...</td><td class="str"><svg class="ty-s" viewBox="0 0 20 15"><use href="#t-str"/></svg>user6</td><td class="str"><svg class="ty-s" viewBox="0 0 20 15"><use href="#t-str"/></svg>test12345</td><td class="str"><svg class="ty-s" viewBox="0 0 20 15"><use href="#t-str"/></svg>김영희3</td><td class="num"><i class="ty">i32</i>426</td><td class="num"><i class="ty">i32</i>4</td><td class="num"><i class="ty">i32</i>2024</td></tr>
													<tr><td class="oid"><i class="ty">id</i>65fabb16281b42...</td><td class="str"><svg class="ty-s" viewBox="0 0 20 15"><use href="#t-str"/></svg>user1</td><td class="str"><svg class="ty-s" viewBox="0 0 20 15"><use href="#t-str"/></svg>test123</td><td class="str"><svg class="ty-s" viewBox="0 0 20 15"><use href="#t-str"/></svg>김회일1</td><td class="num"><i class="ty">i32</i>426</td><td class="num"><i class="ty">i32</i>4</td><td class="num"><i class="ty">i32</i>2024</td></tr>
												</tbody>
											</table>
										</div>
										<div class="grid-vscroll"><i></i></div>
									</div>
									<div class="grid-hscroll"><i></i></div>
									<div class="res-status">
										<span class="rs-sel">1 document selected</span>
										<i class="sh-sep"></i>
										<div class="rs-count"><svg viewBox="0 0 18 20"><path d="M1 1h11l5 5v13H1z" fill="#fff" stroke="#555"/><text x="9" y="15" text-anchor="middle" class="svgt h">#</text></svg>Count Documents</div>
										<i class="sh-sep"></i>
										<div class="rs-time"><svg viewBox="0 0 18 20"><circle cx="9" cy="11" r="8" fill="#fff" stroke="#555" stroke-width="1.300"/><path d="M9 6v5" stroke="#555" stroke-width="1.300"/><path d="M6 1h6v2H6z" fill="#555"/></svg>00:00:00.002</div>
									</div>
								</div>
							</div>
						</div>
					</div>
				</div>
			</div>
		</div>

		<footer class="taskbar">
			<div class="tb-widget">
				<svg viewBox="0 0 24 30"><rect width="22" height="27" y="2" rx="2" fill="#4bb4f2"/><path d="M3 24v-7h3v7zM8 24V13h3v11zM13 24v-8h3v8z" fill="#0d5ea8"/></svg>
				<i class="tb-num">1</i>
				<div class="tb-wtext"><b>예정</b><span>수익</span></div>
			</div>
			<svg class="tb-start" viewBox="0 0 29 29"><use href="#tb-win"/></svg>
			<div class="tb-search">
				<svg class="tb-s-mag" viewBox="0 0 19 19"><use href="#tb-mag"/></svg>
				<span>검색</span>
				<svg class="tb-s-art" viewBox="0 0 64 30"><use href="#tb-art"/></svg>
			</div>
			<div class="tb-app tb-view"><svg viewBox="0 0 31 31"><use href="#tb-view"/></svg></div>
			<div class="tb-app first"><svg viewBox="0 0 30 32"><use href="#tb-meet"/></svg></div>
			<div class="tb-app"><svg viewBox="0 0 30 30"><use href="#tb-exp"/></svg></div>
			<div class="tb-app on"><svg viewBox="0 0 36 32"><use href="#tb-chrome"/></svg></div>
			<div class="tb-app on"><svg viewBox="0 0 30 30"><use href="#tb-note"/></svg></div>
			<div class="tb-app on"><svg viewBox="0 0 30 30"><use href="#tb-talk"/></svg></div>
			<div class="tb-app on"><svg viewBox="0 0 30 30"><use href="#tb-code"/></svg></div>
			<div class="tb-app on"><svg viewBox="0 0 30 30"><use href="#tb-3t"/></svg></div>
			<div class="tb-tray">
				<div class="tr w40"><svg class="tr-caret" viewBox="0 0 14 10"><path d="M1 9l6-7 6 7" fill="none" stroke="#111" stroke-width="1.600"/></svg></div>
				<div class="tr w40"><svg viewBox="0 0 20 22"><use href="#tr-cloud"/></svg></div>
				<div class="tr w47 tr-a">A</div>
				<div class="tr w47 tr-h">한</div>
				<div class="tr w30"><svg viewBox="0 0 22 22"><use href="#tr-wifi"/></svg></div>
				<div class="tr w30"><svg viewBox="0 0 22 22"><use href="#tr-vol"/></svg></div>
				<div class="tr w30"><svg viewBox="0 0 22 20"><use href="#tr-bat"/></svg></div>
				<div class="tb-clock"><span>오후 7:57</span><span>2024-03-20</span></div>
				<svg class="tb-bell" viewBox="0 0 18 26"><use href="#tr-bell"/></svg>
			</div>
		</footer>
	</section>

	<section class="monitor monitor-right">
		<div class="chrome">
			<div class="ch-tabs">
				<div class="ch-list"><svg viewBox="0 0 12 12"><use href="#i-chevd"/></svg></div>
				<div class="ch-tab"><svg viewBox="0 0 16 16"><use href="#f-tis"/></svg><span>JWT, Jinja2 (+쿠키 세</span><svg class="x" viewBox="0 0 10 10"><use href="#x-ic"/></svg></div>
				<div class="ch-tab"><svg viewBox="0 0 16 16"><rect width="16" height="16" rx="2" fill="#20c997"/><text x="8" y="13" text-anchor="middle" class="svgt v">V</text></svg><span>JWT 인증 방식으로 토</span><svg class="x" viewBox="0 0 10 10"><use href="#x-ic"/></svg></div>
				<div class="ch-tab"><svg viewBox="0 0 16 16"><use href="#f-tis"/></svg><span>비주얼스튜디오 코드</span><svg class="x" viewBox="0 0 10 10"><use href="#x-ic"/></svg></div>
				<div class="ch-tab"><svg viewBox="0 0 16 16"><use href="#f-gpt"/></svg><span>JWT 인증 개요</span><svg class="x" viewBox="0 0 10 10"><use href="#x-ic"/></svg></div>
				<div class="ch-tab"><svg viewBox="0 0 16 16"><use href="#f-yt"/></svg><span>(16) [KPOP Playlis</span><svg class="vol" viewBox="0 0 14 14"><path d="M1 5h3l4-3v10l-4-3H1z" fill="#444"/><path d="M10 4c1.500 2 1.500 4 0 6M12 2c2 3 2 7 0 10" fill="none" stroke="#444"/></svg><svg class="x" viewBox="0 0 10 10"><use href="#x-ic"/></svg></div>
				<div class="ch-tab"><svg viewBox="0 0 16 16"><use href="#f-git"/></svg><span>hhyy0179/Jungle01</span><svg class="x" viewBox="0 0 10 10"><use href="#x-ic"/></svg></div>
				<div class="ch-tab"><svg viewBox="0 0 16 16"><use href="#f-tis"/></svg><span>[Git / Github] 깃허브</span><svg class="x" viewBox="0 0 10 10"><use href="#x-ic"/></svg></div>
				<div class="ch-tab last"><svg viewBox="0 0 16 16"><use href="#f-compass"/></svg><span>학습 일정</span><svg class="x" viewBox="0 0 10 10"><use href="#x-ic"/></svg></div>
				<div class="ch-tab on"><svg viewBox="0 0 16 16"><use href="#f-globe"/></svg><span>모두의 냉장고</span><svg class="x" viewBox="0 0 10 10"><use href="#x-ic"/></svg></div>
				<div class="ch-new">+</div>
				<div class="ch-win">
					<span class="w-min"></span>
					<span class="w-max"></span>
					<svg viewBox="0 0 12 12"><path d="M1 1l10 10M11 1L1 11" stroke="#555"/></svg>
				</div>
			</div>

			<div class="ch-bar">
				<svg class="nav" viewBox="0 0 16 16"><path d="M14 8H3M8 3L3 8l5 5" fill="none" stroke="#444" stroke-width="1.600"/></svg>
				<svg class="nav" viewBox="0 0 16 16"><path d="M2 8h11M8 3l5 5-5 5" fill="none" stroke="#b0b3b8" stroke-width="1.600"/></svg>
				<svg class="nav" viewBox="0 0 16 16"><path d="M13 8a5 5 0 1 1-2-4M12 1v4H8" fill="none" stroke="#444" stroke-width="1.600"/></svg>
				<div class="omni">
					<div class="omni-i"><svg viewBox="0 0 16 16"><circle cx="8" cy="8" r="6.500" fill="none" stroke="#333" stroke-width="1.400"/><path d="M8 7v5M8 4v1.600" stroke="#333" stroke-width="1.600"/></svg></div>
					<span>127.0.0.1:5001/registration</span>
					<svg class="omni-r" viewBox="0 0 16 16"><circle cx="7" cy="7" r="5" fill="none" stroke="#444" stroke-width="1.400"/><path d="M11 11l4 4" stroke="#444" stroke-width="1.800"/><path d="M5 7h4M7 5v4" stroke="#444"/></svg>
					<svg class="omni-r" viewBox="0 0 16 16"><path d="M8 1l2 5h5l-4 3.500L12.500 15 8 12l-4.500 3L5 9.500 1 6h5z" fill="none" stroke="#333" stroke-width="1.400"/></svg>
				</div>
				<div class="ch-acts">
					<svg viewBox="0 0 16 18"><path d="M3 2h9l2 2v3h-2v4h2v5H3v-3h2V8H3z" fill="#fff" stroke="#444" stroke-width="1.500"/></svg>
					<i></i>
					<svg viewBox="0 0 16 16"><path d="M1 3h9M1 7h9M1 11h5" stroke="#444" stroke-width="1.600"/><path d="M10 13a2 2 0 1 1 0-.1M12 3v10M12 3h3" fill="none" stroke="#444" stroke-width="1.400"/></svg>
					<svg viewBox="0 0 16 16"><rect x="1" y="1" width="14" height="14" rx="2" fill="#fff" stroke="#444" stroke-width="1.600"/><rect x="9" y="1" width="6" height="14" fill="#444"/></svg>
					<b class="avatar">다현</b>
					<svg viewBox="0 0 4 18"><circle cx="2" cy="3" r="1.700" fill="#444"/><circle cx="2" cy="9" r="1.700" fill="#444"/><circle cx="2" cy="15" r="1.700" fill="#444"/></svg>
				</div>
			</div>

			<div class="ch-marks">
				<div class="bm"><svg viewBox="0 0 16 16"><use href="#f-yt"/></svg><span>YouTube</span></div>
				<div class="bm"><svg viewBox="0 0 16 16"><path d="M2 0h9l3 6-3 10-3-4H2z" fill="#00b2ff"/><circle cx="7" cy="8" r="3" fill="#fff"/><path d="M9 4l3 3-2 2z" fill="#ffc21a"/></svg><span>Papago</span></div>
				<div class="bm"><svg viewBox="0 0 16 16"><path d="M1 0h8l2 3v11H1z" fill="#4285f4"/><path d="M9 5h6v11H7z" fill="#ddd"/><text x="5" y="9" text-anchor="middle" class="svgt g">G</text></svg><span>번역</span></div>
				<div class="bm"><svg viewBox="0 0 16 16"><use href="#f-gpt"/></svg><span>ChatGPT</span></div>
				<div class="bm"><svg viewBox="0 0 16 16"><rect width="16" height="16" fill="#03c75a"/><path d="M4 12V4h2.500L9.500 8V4H12v8H9.500L6.500 8v4z" fill="#fff"/></svg><span>NAVER</span></div>
				<div class="bm"><svg viewBox="0 0 16 16"><circle cx="8" cy="8" r="8" fill="#000"/></svg><span>생활코딩</span></div>
				<div class="bm"><svg viewBox="0 0 16 16"><circle cx="8" cy="8" r="6.500" fill="#e6f7ee" stroke="#3bbf79"/><path d="M5 8a3 3 0 0 1 6 0M8 5v6" fill="none" stroke="#3bbf79" stroke-width="1.300"/></svg><span>인프런 - 프로가 되...</span></div>
				<div class="bm"><svg viewBox="0 0 16 16"><path d="M5 3L1 8l4 5M11 3l4 5-4 5M7 13l3-10" fill="none" stroke="#4a90d9" stroke-width="1.200"/></svg><span>Baekjoon Online Ju...</span></div>
				<div class="bm"><svg viewBox="0 0 16 16"><circle cx="8" cy="8" r="8" fill="#2fc4f2"/><circle cx="8" cy="8" r="4.500" fill="none" stroke="#fff" stroke-width="2"/></svg><span>Allinpdf - Free Onli...</span></div>
				<div class="bm"><svg viewBox="0 0 16 16"><use href="#f-compass"/></svg><span>학습 일정</span></div>
				<div class="bm-all"><svg viewBox="0 0 16 14"><path d="M1 1h5l2 2h7v10H1z" fill="none" stroke="#444" stroke-width="1.500"/></svg><span>모든 북마크</span></div>
			</div>

			<div class="ch-page">
				<aside class="side">
					<div class="side-head">모두의 냉장고</div>
					<div class="side-title">층별 선택</div>
					<nav class="side-nav"><a>1층</a><a>2층</a><a>3층</a><a>4층</a><a>5층</a><a>6층</a><a>7층</a><a>8층</a></nav>
				</aside>
				<main class="content">
					<header class="card-head">
						<button class="close"><svg viewBox="0 0 16 16"><path d="M1 1l14 14M15 1L1 15" stroke="#444" stroke-width="1.500"/></svg></button>
						<h1>모두의 냉장고</h1>
						<button class="reg-light">등록하기</button>
					</header>
					<form class="form">
						<div class="file"><span>Choose file</span><b>Browse</b></div>
						<div class="f-row"><label class="lb-name">음식 이름:</label><input class="inp-name" type="text"></div>
						<div class="f-row"><label class="lb-qty">수량:</label><input class="inp-qty" type="text"><span class="unit">개</span></div>
						<div class="f-row top">
							<label class="lb-date">유통 기한:</label>
							<div class="pick y"><span>2020</span><svg viewBox="0 0 12 10"><path d="M2 2l4 5 4-5" fill="none" stroke="#2f86d6" stroke-width="2.200"/></svg></div><span class="u">년</span>
							<div class="pick"><span>1</span><svg viewBox="0 0 12 10"><path d="M2 2l4 5 4-5" fill="none" stroke="#2f86d6" stroke-width="2.200"/></svg></div><span class="u">월</span>
							<div class="pick"><span>1</span><svg viewBox="0 0 12 10"><path d="M2 2l4 5 4-5" fill="none" stroke="#2f86d6" stroke-width="2.200"/></svg></div><span class="u">일</span>
						</div>
						<label class="memo-lbl">메모:</label>
						<textarea class="memo"></textarea>
						<div class="f-btns"><button type="button" class="btn gray">취소하기</button><button type="button" class="btn blue">등록하기</button></div>
					</form>
				</main>
				<div class="page-scroll"><i></i></div>
			</div>
		</div>

		<footer class="taskbar">
			<div class="tb-widget">
				<svg viewBox="0 0 24 30"><rect width="22" height="27" y="2" rx="2" fill="#4bb4f2"/><path d="M3 24v-7h3v7zM8 24V13h3v11zM13 24v-8h3v8z" fill="#0d5ea8"/></svg>
				<i class="tb-num">1</i>
				<div class="tb-wtext"><b>예정</b><span>수익</span></div>
			</div>
			<svg class="tb-start" viewBox="0 0 29 29"><use href="#tb-win"/></svg>
			<div class="tb-search">
				<svg class="tb-s-mag" viewBox="0 0 19 19"><use href="#tb-mag"/></svg>
				<span>검색</span>
				<svg class="tb-s-art" viewBox="0 0 64 30"><use href="#tb-art"/></svg>
			</div>
			<div class="tb-app tb-view"><svg viewBox="0 0 31 31"><use href="#tb-view"/></svg></div>
			<div class="tb-app first"><svg viewBox="0 0 30 32"><use href="#tb-meet"/></svg></div>
			<div class="tb-app"><svg viewBox="0 0 30 30"><use href="#tb-exp"/></svg></div>
			<div class="tb-app on"><svg viewBox="0 0 36 32"><use href="#tb-chrome"/></svg></div>
			<div class="tb-app on"><svg viewBox="0 0 30 30"><use href="#tb-note"/></svg></div>
			<div class="tb-app on"><svg viewBox="0 0 30 30"><use href="#tb-talk"/></svg></div>
			<div class="tb-app on"><svg viewBox="0 0 30 30"><use href="#tb-code"/></svg></div>
			<div class="tb-app on"><svg viewBox="0 0 30 30"><use href="#tb-3t"/></svg></div>
			<div class="tb-tray">
				<div class="tr w40"><svg class="tr-caret" viewBox="0 0 14 10"><path d="M1 9l6-7 6 7" fill="none" stroke="#111" stroke-width="1.600"/></svg></div>
				<div class="tr w40"><svg viewBox="0 0 20 22"><use href="#tr-cloud"/></svg></div>
				<div class="tr w47 tr-a">A</div>
				<div class="tr w47 tr-h">한</div>
				<div class="tr w30"><svg viewBox="0 0 22 22"><use href="#tr-wifi"/></svg></div>
				<div class="tr w30"><svg viewBox="0 0 22 22"><use href="#tr-vol"/></svg></div>
				<div class="tr w30"><svg viewBox="0 0 22 20"><use href="#tr-bat"/></svg></div>
				<div class="tb-clock"><span>오후 7:57</span><span>2024-03-20</span></div>
				<svg class="tb-bell" viewBox="0 0 18 26"><use href="#tr-bell"/></svg>
			</div>
		</footer>
	</section>
</div>
</body>
</html>
```

FILE: styles.css
```css
* {
	box-sizing: border-box;
}

html, body {
	margin: 0;
	padding: 0;
	background: #fff;
}

body {
	width: 3840px;
	height: 1200px;
	overflow: hidden;
	font-family: "Noto Sans", "Noto Sans CJK KR", sans-serif;
	font-size: 13px;
	color: #222;
}

i, em {
	font-style: normal;
}

.defs {
	position: absolute;
	width: 0;
	height: 0;
}

.screens {
	display: flex;
	align-items: flex-start;
}

.monitor {
	width: 1920px;
	display: flex;
	flex-direction: column;
	overflow: hidden;
}

.monitor-left {
	height: 1080px;
}

.monitor-right {
	height: 1200px;
}

/* text inside svg icons */
.svgt { font-family: "Liberation Sans", sans-serif; font-weight: 700; fill: #fff; }
.svgt.z { font-size: 13px; font-weight: 400; }
.svgt.p { font-size: 6px; }
.svgt.ij { font-size: 13px; font-family: "Liberation Mono", monospace; }
.svgt.t { font-size: 11px; fill: #f5d33a; }
.svgt.tt { font-size: 7.5px; fill: #f5d33a; }
.svgt.vs { font-size: 27px; fill: #e8a93a; font-family: "Liberation Serif", serif; }
.svgt.fz { font-size: 27px; font-style: italic; }
.svgt.y { font-size: 12px; }
.svgt.s { font-size: 10px; fill: #2f7fd0; }
.svgt.q { font-size: 14px; }
.svgt.h { font-size: 10px; fill: #3d6c99; }
.svgt.v { font-size: 13px; font-family: "Liberation Serif", serif; font-style: italic; }
.svgt.g { font-size: 7px; }

/* desktop */
.desktop {
	flex: 1;
	position: relative;
	overflow: hidden;
	background: linear-gradient(165deg, #8aaec9 0%, #a2bfd7 38%, #b6cbdf 72%, #a6bfd8 100%);
}

.wallpaper {
	position: absolute;
	left: 0;
	top: 0;
	width: 1920px;
	height: 1020px;
}

.icons {
	position: relative;
	display: grid;
	grid-template-columns: repeat(4, 95px);
	grid-auto-rows: 108px;
	padding-top: 8px;
	width: 380px;
}

.d-item {
	display: flex;
	flex-direction: column;
	align-items: center;
	color: #fff;
	font-size: 12px;
	line-height: 20px;
	text-align: center;
	text-shadow: 0 1px 2px #000, 0 0 2px rgba(0, 0, 0, .7);
	white-space: nowrap;
}

.d-item svg {
	width: 45px;
	height: 45px;
	margin-bottom: 2px;
}

/* kakaotalk */
.kakao {
	position: absolute;
	left: 1430px;
	top: 0;
	width: 490px;
	height: 798px;
	display: flex;
	background: #fff;
	box-shadow: 0 0 8px rgba(0, 0, 0, .18);
}

.kk-nav {
	width: 82px;
	background: #ececed;
	display: flex;
	justify-content: center;
	padding-top: 56px;
}

.kk-me {
	width: 28px;
	height: 28px;
}

.kk-main {
	flex: 1;
	position: relative;
	display: flex;
	flex-direction: column;
}

.kk-win {
	height: 36px;
	display: flex;
	justify-content: flex-end;
	align-items: center;
	gap: 17px;
	padding-right: 13px;
}

.kk-min {
	width: 12px;
	border-top: 1px solid #bbb;
}

.kk-max {
	width: 11px;
	height: 11px;
	border: 1px solid #bbb;
}

.kk-x {
	width: 12px;
	height: 12px;
}

.kk-head {
	height: 42px;
	display: flex;
	align-items: center;
	padding: 0 28px 0 25px;
}

.kk-title {
	font-size: 24px;
	font-weight: 700;
	color: #111;
}

.kk-caret {
	margin: 5px 0 0 7px;
	border: 4.5px solid transparent;
	border-top: 6px solid #222;
	border-bottom: 0;
}

.kk-tools {
	margin-left: auto;
	display: flex;
	align-items: center;
	gap: 18px;
}

.kk-tools svg {
	width: 30px;
	height: 24px;
}

.kk-list {
	height: 598px;
	overflow: hidden;
	padding-top: 35px;
	border-bottom: 1px solid #e4e4e4;
}

.kk-row {
	height: 87px;
	display: flex;
	flex-direction: column;
	align-items: flex-end;
	padding-right: 28px;
}

.kk-time {
	font-size: 12px;
	line-height: 24px;
	color: #b5b5b5;
}

.kk-badge {
	width: 21px;
	height: 21px;
	margin-top: 4px;
	border-radius: 50%;
	background: #ff6f61;
	color: #fff;
	font-size: 12px;
	font-weight: 700;
	line-height: 21px;
	text-align: center;
}

.kk-ad {
	padding: 29px 0 0 320px;
	font-size: 14px;
	line-height: 24px;
	color: #333;
}

.kk-scroll {
	position: absolute;
	right: 4px;
	top: 96px;
	width: 11px;
	height: 25px;
	border-radius: 6px;
	background: #c8c8c8;
}

/* studio 3t */
.studio {
	position: absolute;
	left: 410px;
	top: 107px;
	width: 1422px;
	height: 730px;
	display: flex;
	flex-direction: column;
	background: #efefef;
	border-radius: 8px;
	overflow: hidden;
	box-shadow: 0 0 10px rgba(0, 0, 0, .28);
	font-size: 14.5px;
}

.st-title {
	height: 37px;
	flex: none;
	background: #f6f6f6;
	display: flex;
	align-items: center;
	padding-left: 9px;
	color: #7f7f7f;
}

.st-logo {
	width: 20px;
	height: 20px;
	margin-right: 6px;
}

.st-win {
	margin-left: auto;
	display: flex;
	align-items: center;
	gap: 46px;
	padding-right: 24px;
}

.st-win svg {
	width: 12px;
	height: 12px;
}

.st-min {
	width: 12px;
	border-top: 1px solid #555;
}

.st-max {
	width: 12px;
	height: 12px;
	border: 1px solid #444;
}

.st-menu {
	height: 23px;
	flex: none;
	background: #fff;
	display: flex;
	align-items: center;
	gap: 18px;
	padding-left: 9px;
	color: #666;
}

.st-tools {
	height: 101px;
	flex: none;
	display: flex;
	border-bottom: 1px solid #c8c8c8;
	padding-left: 9px;
}

.st-tool {
	position: relative;
	display: flex;
	flex-direction: column;
	align-items: center;
	padding-top: 21px;
	white-space: nowrap;
}

.st-tool svg {
	width: 36px;
	height: 36px;
	margin-bottom: 13px;
}

.w-connect { width: 58px; margin-right: 60px; }
.w-shell { width: 76px; margin-right: 36px; }
.w-exp { width: 50px; margin-right: 26px; }
.w-imp { width: 50px; margin-right: 37px; }
.w-fb { width: 70px; margin-right: 15px; }
.w-more { width: 90px; }

.tri {
	display: inline-block;
	border: 4.5px solid transparent;
	border-top: 6px solid #111;
	border-bottom: 0;
}

.st-tri {
	position: absolute;
	left: 70px;
	top: 47px;
}

.st-body {
	flex: 1;
	min-height: 0;
	display: flex;
	gap: 7px;
	padding: 11px 6px 7px 11px;
}

.st-left {
	width: 341px;
	display: flex;
	border: 1px solid #c8c8c8;
}

.vtabs {
	width: 35px;
	display: flex;
	flex-direction: column;
	border-right: 1px solid #c8c8c8;
}

.vtab {
	display: flex;
	flex-direction: column;
	align-items: center;
}

.vtab span {
	writing-mode: vertical-rl;
	transform: rotate(180deg);
	line-height: 20px;
	color: #222;
}

.vtab-open {
	height: 183px;
	padding-top: 28px;
	border-bottom: 1px solid #c8c8c8;
}

.vtab-ops {
	flex: 1;
	background: #e9e9e9;
	padding-top: 220px;
}

.vtab-ops b {
	font-weight: 400;
	font-size: 20px;
	line-height: 20px;
	margin-top: 38px;
	color: #444;
}

.tree-area {
	flex: 1;
	min-width: 0;
	display: flex;
	flex-direction: column;
}

.tree-search {
	display: flex;
	align-items: center;
	height: 44px;
	padding: 0 6px 10px 7px;
}

.tree-input {
	width: 258px;
	height: 24px;
	display: flex;
	align-items: center;
	gap: 3px;
	padding-left: 4px;
	background: #f3f3f3;
	border-bottom: 1px solid #aaa;
	border-right: 1px solid #ddd;
	color: #8a8a8a;
	white-space: nowrap;
	font-size: 12.8px;
}

.tree-input svg {
	width: 14px;
	height: 16px;
}

.tree-search b {
	margin-left: 11px;
	font-size: 14px;
	color: #555;
}

.tree {
	flex: 1;
}

.t-row {
	height: 25px;
	display: flex;
	align-items: center;
	white-space: nowrap;
	overflow: hidden;
}

.lv0 { padding-left: 7px; }
.lv1 { padding-left: 27px; }
.lv2 { padding-left: 46px; }
.lv3 { padding-left: 67px; }

.root {
	font-weight: 700;
	font-size: 14px;
}

.sel {
	background: #c9c9c9;
}

.hov {
	background: #d9e6f2;
}

.chev {
	flex: none;
	width: 10px;
	height: 10px;
	margin-right: 5px;
}

.ico {
	flex: none;
	width: 18px;
	height: 18px;
	margin-right: 6px;
}

.db, .ico20.db {
	fill: #f3f3f3;
	stroke: #444;
	stroke-width: 1.1;
}

.tree-scroll {
	height: 15px;
	padding: 0 40px 0 19px;
	border-top: 1px solid #fff;
}

.tree-scroll i {
	display: block;
	height: 6px;
	margin-top: 2px;
	background: #8a8a8a;
}

.st-right {
	flex: 1;
	min-width: 0;
	display: flex;
	flex-direction: column;
}

.doc-tabs {
	height: 38px;
	flex: none;
	display: flex;
}

.doc-tab {
	display: flex;
	align-items: center;
	justify-content: space-between;
	padding: 0 8px 0 7px;
	border-top: 1px solid #c8c8c8;
	border-right: 1px solid #c8c8c8;
	white-space: nowrap;
}

.doc-tab svg {
	width: 9px;
	height: 9px;
}

.doc-tab.on {
	background: #fff;
	border-top: 4px solid #34597f;
	margin-bottom: -1px;
	position: relative;
}

.w-quick { width: 105px; border-left: 1px solid #c8c8c8; }
.w-shell1 { width: 220px; }
.w-shell2 { width: 221px; }

.doc-panel {
	flex: 1;
	min-height: 0;
	display: flex;
	flex-direction: column;
	border: 1px solid #2f5a80;
}

.crumb {
	height: 47px;
	flex: none;
	display: flex;
	align-items: center;
	padding-left: 13px;
	margin-left: 1px;
	border-bottom: 1px solid #c8c8c8;
}

.ico20 {
	width: 20px;
	height: 20px;
	margin-right: 8px;
}

.crumb-gt {
	width: 11px;
	height: 11px;
	margin-left: 7px;
	margin-right: -2px;
}

.shell {
	flex: 1;
	min-height: 0;
	display: flex;
	flex-direction: column;
	padding: 0 12px 11px 11px;
}

.sh-tools {
	height: 47px;
	flex: none;
	display: flex;
	align-items: center;
	padding-left: 4px;
}

.play {
	width: 18px;
	height: 26px;
	margin-right: 8px;
}

.sh-sep {
	flex: none;
	width: 1px;
	height: 24px;
	background: #c8c8c8;
}

.sh-tools .sh-sep {
	margin: 0 6px;
}

.sh-btn {
	display: flex;
	align-items: center;
	gap: 3px;
	white-space: nowrap;
}

.sh-btn svg {
	width: 20px;
	height: 22px;
}

.b-new { margin-left: 8px; width: 71px; }
.b-load { width: 102px; }
.b-save { width: 115px; gap: 4px; }
.b-save .tri { margin-left: 12px; border-top-color: #222; }
.b-view { margin-left: 8px; }

.sh-assist {
	width: 168px;
	height: 33px;
	flex: none;
	display: flex;
	align-items: center;
	gap: 5px;
	margin-left: 5px;
	padding-left: 3px;
	background: #cfe5f8;
	border: 1px solid #8cc3ee;
	border-radius: 2px;
	white-space: nowrap;
	font-size: 14px;
}

.sh-assist svg {
	width: 20px;
	height: 20px;
}

.editor {
	height: 61px;
	flex: none;
	border: 1px solid #c8c8c8;
	display: flex;
	flex-direction: column;
}

.ed-line {
	height: 29px;
	flex: none;
	display: flex;
	border-bottom: 1px solid #c8c8c8;
	overflow: hidden;
}

.ed-no {
	width: 35px;
	display: flex;
	align-items: center;
	justify-content: flex-end;
	gap: 4px;
	padding-right: 3px;
	background: #f0f0f0;
	font-family: "Liberation Mono", monospace;
	font-size: 14px;
	color: #444;
}

.ed-no svg {
	width: 8px;
	height: 10px;
}

.ed-code {
	flex: 1;
	height: 20px;
	background: #fdf7e3;
	font-family: "Liberation Mono", monospace;
	font-size: 15px;
	line-height: 20px;
	white-space: nowrap;
	padding-left: 1px;
}

.ed-code em {
	color: #2b8a2b;
}

.ed-mark {
	width: 37px;
	display: flex;
	align-items: center;
	justify-content: flex-end;
	padding-right: 3px;
	background: #efefef;
}

.ed-mark i {
	display: block;
	width: 13px;
	height: 5px;
	background: #a8a23a;
}

.ed-foot {
	flex: 1;
	display: flex;
	align-items: center;
	background: #fff;
	padding: 0 6px 0 42px;
	font-size: 13px;
}

.ed-ico {
	width: 27px;
	height: 24px;
	display: flex;
	align-items: center;
	justify-content: center;
}

.ed-ico svg {
	width: 17px;
	height: 18px;
}

.ed-ico.on {
	background: #d5e8f8;
	border: 1px solid #a6cdf0;
	border-radius: 2px;
}

.ed-pos {
	margin-left: auto;
	color: #999;
}

.ed-ok {
	margin-left: 7px;
	color: #79b579;
}

.results {
	flex: 1;
	min-height: 0;
	margin-top: 11px;
	border: 1px solid #c8c8c8;
	display: flex;
	flex-direction: column;
}

.res-tabs {
	height: 37px;
	flex: none;
	display: flex;
	border-bottom: 1px solid #c8c8c8;
}

.res-tab {
	display: flex;
	align-items: center;
	padding-left: 6px;
	white-space: nowrap;
}

.w-raw {
	width: 129px;
	border-right: 1px solid #c8c8c8;
}

.w-find {
	width: 184px;
	background: #fff;
	border-top: 4px solid #b3b3b3;
	margin-bottom: -1px;
	border-right: 1px solid #c8c8c8;
}

.w-find svg {
	width: 12px;
	height: 12px;
	margin-left: 8px;
}

.w-find svg + svg {
	width: 9px;
	height: 9px;
	margin-left: 5px;
}

.res-tools {
	height: 43px;
	flex: none;
	display: flex;
	align-items: center;
	padding-left: 10px;
	border-bottom: 1px solid #c8c8c8;
	white-space: nowrap;
}

.rt-refresh {
	width: 22px;
	height: 22px;
	margin-right: 16px;
}

.rt-nav {
	width: 18px;
	height: 12px;
	margin-right: 13px;
}

.res-tools .sh-sep {
	margin: 0 12px;
}

.dd {
	height: 28px;
	flex: none;
	display: flex;
	align-items: center;
	justify-content: space-between;
	padding: 0 4px;
	background: #fff;
	border: 1px solid #aaa;
	border-radius: 2px;
}

.dd svg {
	width: 12px;
	height: 12px;
}

.dd-limit {
	width: 133px;
	margin-left: -6px;
}

.rt-count {
	width: 128px;
	margin-left: -2px;
}

.rt-icons {
	display: flex;
	gap: 7px;
	margin-left: 1px;
}

.rt-icons svg {
	width: 20px;
	height: 22px;
}

.dd-view {
	width: 107px;
	margin-left: 95px;
	border-color: #ccc;
}

.rt-custom {
	display: flex;
	align-items: center;
	gap: 5px;
	margin-left: 11px;
}

.rt-custom svg {
	width: 19px;
	height: 19px;
}

.tri.big {
	margin-left: 7px;
	border-width: 6px;
	border-top-width: 9px;
	border-bottom-width: 0;
}

.res-path {
	height: 41px;
	flex: none;
	display: flex;
	align-items: center;
	gap: 4px;
	padding-left: 8px;
}

.res-path svg {
	width: 11px;
	height: 11px;
}

.res-path span {
	color: #888;
}

.grid-wrap {
	height: 160px;
	flex: none;
	display: flex;
	padding-left: 1px;
}

.grid-clip {
	width: 1009px;
	height: 160px;
	overflow: hidden;
	background: #fff;
}

.docs {
	width: 1009px;
	table-layout: fixed;
	border-collapse: collapse;
}

.docs th {
	height: 27px;
	width: 156px;
	padding: 0 0 0 7px;
	font-weight: 400;
	text-align: left;
	white-space: nowrap;
	overflow: hidden;
	border-left: 1px solid #eee;
}

.docs th:first-child {
	padding-left: 6px;
	border-left: 0;
}

.docs th:last-child {
	width: 73px;
}

.docs td {
	height: 25px;
	padding: 0 0 0 8px;
	white-space: nowrap;
	overflow: hidden;
	border-left: 1px solid #eee;
	border-bottom: 1px solid #eee;
}

.docs td:first-child {
	border-left: 0;
}

.ty, .ty-s {
	display: inline-block;
	width: 20px;
	height: 15px;
	vertical-align: -3px;
	margin-right: 8px;
}

.ty {
	border: 1px solid #777;
	background: #f6f6f6;
	font-size: 10.5px;
	line-height: 13px;
	text-align: center;
	color: #333;
}

.oid .ty {
	margin-right: 3px;
}

.num .ty {
	font-size: 9px;
	font-weight: 700;
}

.str { color: #0a8a0a; }
.num { color: #3f5bd9; }

.grid-vscroll {
	flex: 1;
	padding: 29px 0 0 8px;
}

.grid-vscroll i {
	display: block;
	width: 5px;
	height: 39px;
	background: #888;
}

.grid-hscroll {
	height: 22px;
	flex: none;
	padding: 8px 618px 0 22px;
	border-bottom: 1px solid #c8c8c8;
}

.grid-hscroll i {
	display: block;
	height: 6px;
	background: #888;
}

.res-status {
	flex: 1;
	display: flex;
	align-items: center;
	padding-left: 43px;
	white-space: nowrap;
}

.rs-sel {
	width: 675px;
}

.rs-count, .rs-time {
	display: flex;
	align-items: center;
	gap: 6px;
}

.rs-count {
	width: 179px;
	padding-left: 13px;
}

.rs-time {
	gap: 12px;
	padding-left: 11px;
}

.rs-count svg, .rs-time svg {
	width: 18px;
	height: 20px;
}

/* taskbar */
.taskbar {
	height: 60px;
	flex: none;
	display: flex;
	background: linear-gradient(90deg, #e6eff8 0%, #dbe6f7 25%, #d6dff4 50%, #d9e3f5 65%, #e4eef8 100%);
	border-top: 1px solid #b4bcc4;
}

.tb-widget {
	width: 585px;
	flex: none;
	display: flex;
	align-items: center;
	padding-left: 29px;
	position: relative;
}

.tb-widget svg {
	width: 24px;
	height: 30px;
}

.tb-num {
	position: absolute;
	left: 39px;
	top: 8px;
	width: 19px;
	height: 19px;
	border-radius: 50%;
	background: #c42b1c;
	color: #fff;
	font-size: 12px;
	line-height: 19px;
	text-align: center;
}

.tb-wtext {
	display: flex;
	flex-direction: column;
	margin-left: 11px;
	font-size: 13px;
	line-height: 20px;
}

.tb-wtext b {
	font-weight: 400;
	color: #111;
}

.tb-wtext span {
	color: #555;
}

.tb-start {
	width: 29px;
	height: 29px;
	margin: 14px 18px 0 0;
}

.tb-search {
	width: 273px;
	height: 40px;
	margin-top: 9px;
	display: flex;
	align-items: center;
	padding: 0 3px 0 13px;
	background: #f1f5fd;
	border: 1px solid #c3cbdd;
	border-radius: 20px;
	font-size: 14px;
	color: #444;
}

.tb-s-mag {
	width: 19px;
	height: 19px;
	margin-right: 13px;
}

.tb-s-art {
	width: 62px;
	height: 30px;
	margin-left: auto;
}

.tb-app {
	width: 55px;
	flex: none;
	display: flex;
	flex-direction: column;
	align-items: center;
	padding-top: 14px;
}

.tb-app svg {
	width: 30px;
	height: 30px;
}

.tb-app::after {
	content: "";
	width: 6px;
	height: 6px;
	margin-top: 5px;
	border-radius: 50%;
}

.tb-app.on::after {
	background: #7a7f87;
}

.tb-view svg {
	width: 25px;
	height: 25px;
	margin-top: 2px;
}

.first {
	margin-left: 3px;
}

.tb-tray {
	margin-left: auto;
	display: flex;
	align-items: center;
	color: #111;
}

.tr {
	display: flex;
	align-items: center;
	justify-content: center;
}

.tr svg {
	width: 22px;
	height: 22px;
}

.tr .tr-caret {
	width: 14px;
	height: 10px;
}

.w30 { width: 30px; }
.w40 { width: 40px; }
.w47 { width: 47px; }

.tr-a {
	font-size: 27px;
	font-weight: 300;
	line-height: 30px;
	font-family: Lato, "Liberation Sans", sans-serif;
	color: #222;
}

.tr-h {
	font-size: 19px;
	font-weight: 300;
}

.tb-clock {
	width: 99px;
	display: flex;
	flex-direction: column;
	align-items: flex-end;
	font-size: 13px;
	line-height: 20px;
}

.tb-bell {
	width: 18px;
	height: 26px;
	margin: 0 26px 0 10px;
}

/* chrome */
.chrome {
	flex: 1;
	min-height: 0;
	display: flex;
	flex-direction: column;
	font-size: 12.5px;
}

.ch-tabs {
	height: 40px;
	flex: none;
	display: flex;
	align-items: flex-end;
	background: #dee3e9;
	padding-left: 6px;
}

.ch-list {
	width: 28px;
	height: 28px;
	margin: 0 3px 6px 0;
	display: flex;
	align-items: center;
	justify-content: center;
	background: #fff;
	border-radius: 10px;
}

.ch-list svg {
	width: 11px;
	height: 11px;
}

.ch-tab {
	width: 185px;
	height: 32px;
	flex: none;
	display: flex;
	align-items: center;
	gap: 8px;
	padding: 0 13px 0 11px;
	position: relative;
	color: #555;
}

.ch-tab > svg:first-child {
	flex: none;
	width: 16px;
	height: 16px;
}

.ch-tab span {
	flex: 1;
	min-width: 0;
	overflow: hidden;
	white-space: nowrap;
}

.ch-tab .x {
	flex: none;
	width: 8px;
	height: 8px;
}

.ch-tab .vol {
	flex: none;
	width: 14px;
	height: 14px;
}

.ch-tab::after {
	content: "";
	position: absolute;
	right: 0;
	top: 7px;
	height: 18px;
	border-right: 1px solid #a9adb3;
}

.ch-tab.last::after {
	display: none;
}

.ch-tab.on {
	width: 178px;
	height: 34px;
	background: #fff;
	border-radius: 10px 10px 0 0;
	color: #222;
	margin-right: 7px;
}

.ch-tab.on::before,
.ch-tab.on::after {
	content: "";
	position: absolute;
	top: auto;
	bottom: 0;
	width: 8px;
	height: 8px;
	border: 0;
}

.ch-tab.on::before {
	left: -8px;
	background: radial-gradient(circle at 0 0, transparent 8px, #fff 8.5px);
}

.ch-tab.on::after {
	right: -8px;
	background: radial-gradient(circle at 100% 0, transparent 8px, #fff 8.5px);
}

.ch-new {
	font-size: 20px;
	line-height: 32px;
	width: 26px;
	color: #444;
	text-align: center;
}

.ch-win {
	margin-left: auto;
	display: flex;
	align-items: center;
	gap: 35px;
	height: 40px;
	padding-right: 16px;
}

.ch-win svg {
	width: 12px;
	height: 12px;
}

.w-min {
	width: 11px;
	border-top: 1px solid #666;
}

.w-max {
	width: 10px;
	height: 12px;
	border: 1px solid #666;
	border-radius: 2px;
}

.ch-bar {
	height: 40px;
	flex: none;
	display: flex;
	align-items: flex-end;
	background: #fff;
	padding-left: 13px;
}

.ch-bar .nav {
	width: 16px;
	height: 16px;
	margin: 0 20px 9px 0;
}

.omni {
	width: 1589px;
	height: 34px;
	margin-left: -7px;
	flex: none;
	display: flex;
	align-items: center;
	padding-left: 4px;
	background: #e9eef6;
	border-radius: 17px;
	font-size: 14px;
	color: #333;
}

.omni-i {
	width: 26px;
	height: 26px;
	display: flex;
	align-items: center;
	justify-content: center;
	background: #fff;
	border-radius: 50%;
	margin-right: 6px;
}

.omni-i svg {
	width: 16px;
	height: 16px;
}

.omni span {
	flex: 1;
}

.omni-r {
	width: 16px;
	height: 16px;
	margin-right: 16px;
}

.ch-acts {
	flex: 1;
	height: 34px;
	display: flex;
	align-items: center;
	padding-left: 18px;
	gap: 18px;
}

.ch-acts svg {
	width: 16px;
	height: 18px;
}

.ch-acts svg:last-child {
	width: 4px;
}

.ch-acts i {
	width: 1px;
	height: 24px;
	background: #c9d8ee;
}

.avatar {
	width: 20px;
	height: 20px;
	flex: none;
	border-radius: 50%;
	background: #0c9baa;
	color: #d5f2f5;
	font-size: 8px;
	font-weight: 400;
	line-height: 20px;
	text-align: center;
}

.ch-marks {
	height: 41px;
	flex: none;
	display: grid;
	grid-template-columns: 83px 73px 69px 85px 76px 86px 149px 153px 146px 1fr auto;
	align-items: center;
	padding: 0 15px 0 12px;
	background: #fff;
	border-bottom: 1px solid #e0e0e0;
	color: #444;
	font-size: 13px;
	white-space: nowrap;
}

.bm {
	display: flex;
	align-items: center;
	gap: 6px;
}

.bm svg {
	flex: none;
	width: 16px;
	height: 16px;
}

.bm-all {
	display: flex;
	align-items: center;
	gap: 7px;
	padding-left: 18px;
	height: 24px;
	border-left: 1px solid #c9d8ee;
}

.bm-all svg {
	width: 16px;
	height: 14px;
}

.ch-page {
	flex: 1;
	min-height: 0;
	display: flex;
	background: #f9f9f9;
}

.side {
	width: 250px;
	flex: none;
	display: flex;
	flex-direction: column;
	background: #7285d3;
	border-radius: 8px 8px 0 0;
	color: #fff;
}

.side-head {
	height: 59px;
	flex: none;
	padding-left: 21px;
	background: #6c7ec9;
	border-radius: 8px 8px 0 0;
	font-size: 16px;
	line-height: 58px;
}

.side-title {
	padding: 31px 0 0 11px;
	font-size: 18px;
	line-height: 26px;
}

.side-nav {
	display: flex;
	flex-direction: column;
	margin-top: 12px;
	padding-bottom: 20px;
	border-bottom: 1px solid #4a62a8;
}

.side-nav a {
	height: 46.4px;
	padding-left: 11px;
	font-size: 16px;
	font-weight: 500;
	line-height: 46px;
}

.content {
	flex: 1;
	min-width: 0;
	padding: 20px 20px 0;
}

.card-head {
	height: 96px;
	display: flex;
	justify-content: space-between;
	align-items: center;
	padding: 0 25px;
	background: #f8f9fa;
	box-shadow: 0 1px 3px rgba(0, 0, 0, .12);
}

.card-head h1 {
	margin: -6px 0 0;
	font-size: 34px;
	font-weight: 700;
	color: #000;
}

.close {
	width: 40px;
	height: 40px;
	display: flex;
	align-items: center;
	justify-content: center;
	padding: 0;
	background: #f4f4f4;
	border: 0;
}

.close svg {
	width: 16px;
	height: 16px;
}

.reg-light {
	width: 110px;
	height: 50px;
	margin-top: -16px;
	background: #cce5ff;
	border: 1px solid #b8daff;
	border-radius: 4px;
	color: #004085;
	font-family: inherit;
	font-size: 16px;
}

.form {
	width: 640px;
	margin: 70px auto 0;
	font-size: 17px;
	color: #333;
}

.file {
	height: 38px;
	display: flex;
	align-items: center;
	justify-content: space-between;
	padding-left: 11px;
	background: #fff;
	border: 1px solid #ced4da;
	border-radius: 4px;
	color: #495057;
	overflow: hidden;
}

.file b {
	width: 83px;
	height: 38px;
	background: #e9ecef;
	border-left: 1px solid #ced4da;
	font-weight: 400;
	line-height: 36px;
	text-align: center;
}

.f-row {
	display: flex;
	align-items: center;
	height: 30px;
	margin-top: 30px;
}

.f-row:first-of-type {
	margin-top: 31px;
}

.f-row.top {
	align-items: flex-start;
}

.f-row label {
	line-height: 30px;
}

.f-row.top label {
	line-height: 22px;
}

.lb-name { width: 105px; }
.lb-qty { width: 68px; }
.lb-date { width: 100px; }

.f-row input {
	height: 30px;
	padding: 0;
	background: #fff;
	border: 1px solid #767676;
	border-radius: 2px;
}

.inp-name {
	width: 187px;
}

.inp-qty {
	width: 49px;
}

.unit {
	margin-left: 17px;
}

.pick {
	width: 56px;
	height: 30px;
	display: flex;
	align-items: center;
	justify-content: space-between;
	padding: 0 9px 0 12px;
	background: #fff;
	border: 1px solid #3d8bd0;
	border-radius: 15px;
	font-size: 14px;
}

.pick.y {
	width: 70px;
}

.pick svg {
	width: 11px;
	height: 9px;
}

.u {
	width: 40px;
	padding-left: 6px;
	line-height: 22px;
}

.memo-lbl {
	display: block;
	margin-top: 28px;
	line-height: 24px;
}

.memo {
	display: block;
	width: 398px;
	height: 133px;
	margin-top: 2px;
	background: #fff;
	border: 1px solid #ced4da;
	border-radius: 4px;
}

.f-btns {
	display: flex;
	justify-content: flex-end;
	gap: 30px;
	margin-top: 31px;
}

.btn {
	width: 90px;
	height: 38px;
	border: 0;
	border-radius: 4px;
	color: #fff;
	font-family: inherit;
	font-size: 17px;
}

.gray {
	background: #6c757d;
}

.blue {
	background: #007bff;
}

.page-scroll {
	width: 17px;
	flex: none;
	display: flex;
	justify-content: center;
	padding-top: 10px;
	background: #f1f1f1;
}

.page-scroll i {
	border: 4px solid transparent;
	border-bottom: 5px solid #a3a3a3;
	border-top: 0;
	height: 5px;
}
```
